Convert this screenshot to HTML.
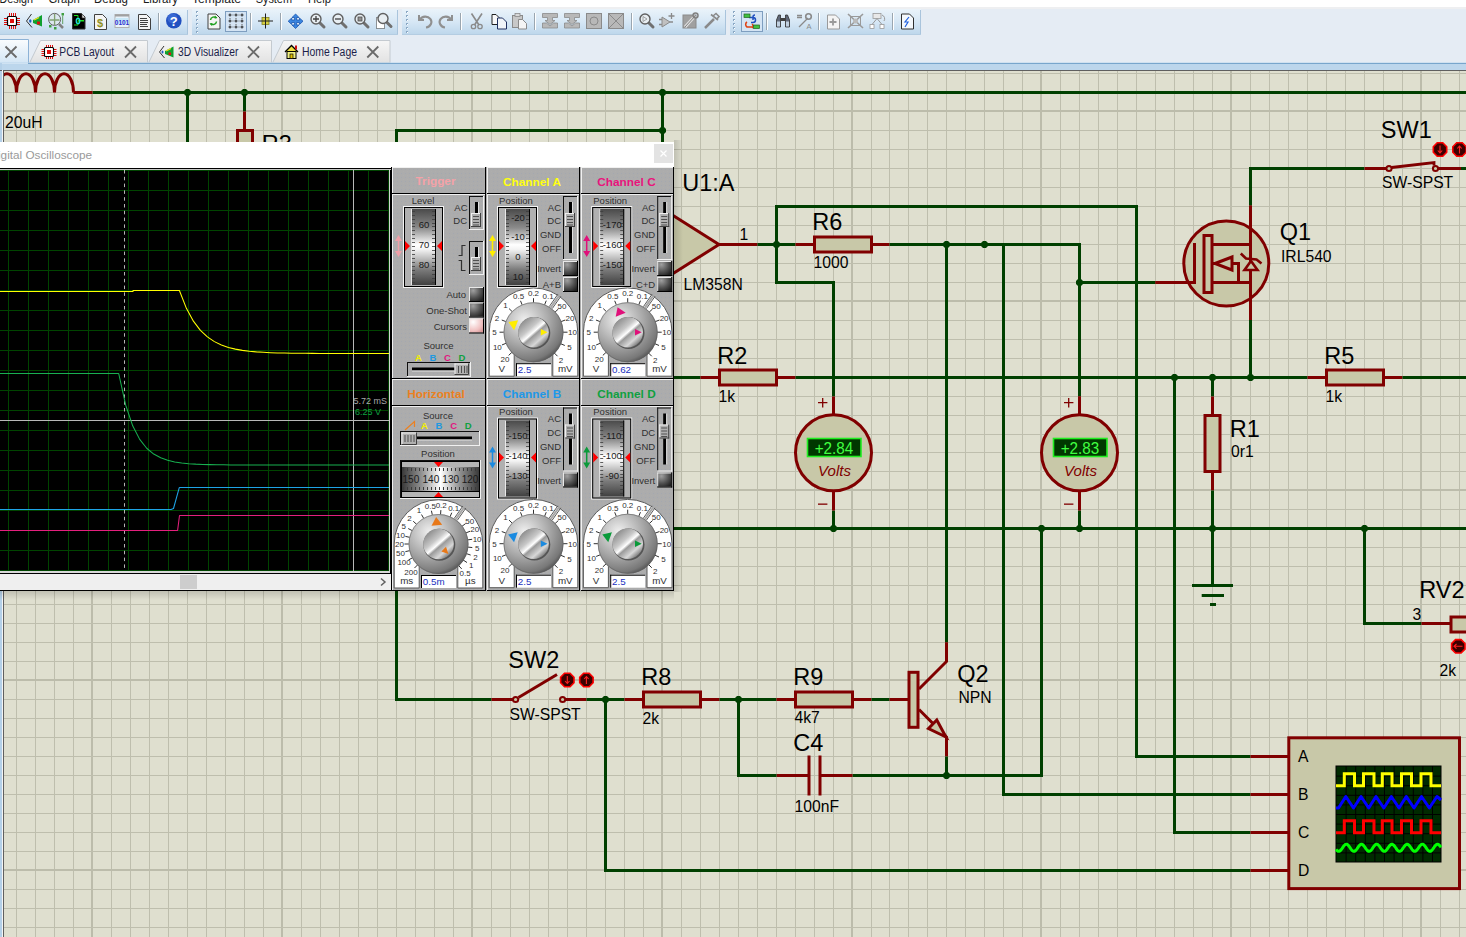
<!DOCTYPE html><html><head><meta charset="utf-8"><style>html,body{margin:0;padding:0;width:1466px;height:937px;overflow:hidden;background:#fff}</style></head><body><svg width="1466" height="937" viewBox="0 0 1466 937" font-family='"Liberation Sans", sans-serif' style="display:block">
<defs><linearGradient id="tbg" x1="0" y1="0" x2="0" y2="1"><stop offset="0" stop-color="#eaf3fa"/><stop offset="0.5" stop-color="#d6e7f5"/><stop offset="1" stop-color="#bcd6eb"/></linearGradient><linearGradient id="tabg" x1="0" y1="0" x2="0" y2="1"><stop offset="0" stop-color="#f6f6f6"/><stop offset="1" stop-color="#e2e2e2"/></linearGradient><linearGradient id="tabA" x1="0" y1="0" x2="0" y2="1"><stop offset="0" stop-color="#fafcfe"/><stop offset="1" stop-color="#d4e6f5"/></linearGradient></defs>
<rect x="0" y="0" width="1466" height="71" fill="#e5ecf4"/>
<rect x="0" y="0" width="1466" height="7" fill="#ffffff"/>
<rect x="0" y="7" width="1466" height="2" fill="#eeeff1"/>
<text x="-0.5" y="3" font-size="12.5" fill="#1a1a1a" text-anchor="start" font-weight="normal" font-style="normal" textLength="33.5" lengthAdjust="spacingAndGlyphs">Design</text>
<text x="48.4" y="3" font-size="12.5" fill="#1a1a1a" text-anchor="start" font-weight="normal" font-style="normal" textLength="31.4" lengthAdjust="spacingAndGlyphs">Graph</text>
<text x="94" y="3" font-size="12.5" fill="#1a1a1a" text-anchor="start" font-weight="normal" font-style="normal" textLength="34.0" lengthAdjust="spacingAndGlyphs">Debug</text>
<text x="143" y="3" font-size="12.5" fill="#1a1a1a" text-anchor="start" font-weight="normal" font-style="normal" textLength="35.0" lengthAdjust="spacingAndGlyphs">Library</text>
<text x="192" y="3" font-size="12.5" fill="#1a1a1a" text-anchor="start" font-weight="normal" font-style="normal" textLength="49.0" lengthAdjust="spacingAndGlyphs">Template</text>
<text x="255.7" y="3" font-size="12.5" fill="#1a1a1a" text-anchor="start" font-weight="normal" font-style="normal" textLength="36.3" lengthAdjust="spacingAndGlyphs">System</text>
<text x="308" y="3" font-size="12.5" fill="#1a1a1a" text-anchor="start" font-weight="normal" font-style="normal" textLength="23.0" lengthAdjust="spacingAndGlyphs">Help</text>
<rect x="0" y="9" width="188" height="26" fill="url(#tbg)"/><rect x="187" y="10" width="1" height="25" fill="#a9c4dc"/><rect x="0" y="34" width="188" height="1" fill="#b4cde2"/>
<rect x="192" y="9" width="206" height="26" fill="url(#tbg)"/><rect x="397" y="10" width="1" height="25" fill="#a9c4dc"/><rect x="192" y="34" width="206" height="1" fill="#b4cde2"/>
<rect x="402" y="9" width="324" height="26" fill="url(#tbg)"/><rect x="725" y="10" width="1" height="25" fill="#a9c4dc"/><rect x="402" y="34" width="324" height="1" fill="#b4cde2"/>
<rect x="730" y="9" width="191" height="26" fill="url(#tbg)"/><rect x="920" y="10" width="1" height="25" fill="#a9c4dc"/><rect x="730" y="34" width="191" height="1" fill="#b4cde2"/>
<path d="M9.5 13v3M11.5 13v3M13.5 13v3M15.5 13v3M9.5 26v3M11.5 26v3M13.5 26v3M15.5 26v3M4 18.5h3M4 20.5h3M4 22.5h3M4 24.5h3M17 18.5h3M17 20.5h3M17 22.5h3M17 24.5h3" stroke="#e01010" stroke-width="1"/>
<rect x="7.5" y="16.5" width="9" height="9" rx="1" fill="#fff" stroke="#000" stroke-width="1.2"/><rect x="10" y="19" width="4" height="4" fill="#e01010"/>
<path d="M31.5 14 L26.5 21 L32 27.5" stroke="#303030" stroke-width="1" fill="none"/><ellipse cx="30.3" cy="21" rx="1.2" ry="1.8" fill="#2060c0"/>
<path d="M33 20 L42 15 V26.5 L33 23 Z" fill="#10a030"/><path d="M34 20 L39 17.5" stroke="#f0e020" stroke-width="1.3"/><rect x="37" y="21.5" width="3" height="3" fill="#e01010"/>
<circle cx="54.6" cy="19.4" r="6" fill="#dce8f0" stroke="#606060" stroke-width="1"/><path d="M54.6 14 V25 M49.5 20 H59.5" stroke="#80a070" stroke-width="1.3"/><path d="M59 24 L63 28" stroke="#808080" stroke-width="2.5"/><rect x="49" y="25" width="2.5" height="2.5" fill="#40a040"/><rect x="54" y="27" width="2.5" height="2.5" fill="#40a040"/><rect x="61.5" y="13" width="2.5" height="2.5" fill="#40a040"/><path d="M62.7 15.5 V24" stroke="#60a060" stroke-width="1"/>
<path d="M72.5 13.5 h9 l3.5 3.5 v12 h-12.5 Z" fill="#000" stroke="#303030" stroke-width="1"/><path d="M82 14 v4 h3" fill="#fff" stroke="#303030" stroke-width="0.8"/>
<path d="M74 15.5 h4 v5 h6 M74 25 h4 v-4 h6" stroke="#20e020" stroke-width="1" fill="none"/><ellipse cx="78" cy="21" rx="1.8" ry="2.6" fill="none" stroke="#20e0e0" stroke-width="1.2"/>
<path d="M94.5 14.5 h8 l4 4 v11 h-12 Z" fill="#f4f4f4" stroke="#404040" stroke-width="1"/>
<text x="100" y="26.5" font-size="11" fill="#909020" text-anchor="middle" font-weight="bold">$</text>
<rect x="115" y="14.5" width="14" height="13" fill="#e8f2fa" stroke="#b0b0b0" stroke-width="1"/><rect x="115" y="14.5" width="14" height="2" fill="#a0a0a0"/><rect x="115.5" y="18" width="13" height="6" fill="#c8e8f8"/>
<text x="122" y="25" font-size="6.5" fill="#3030d0" text-anchor="middle" font-weight="bold">0101</text>
<path d="M138.5 14.5 h8 l4 4 v11 h-12 Z" fill="#f4f4f4" stroke="#404040" stroke-width="1"/>
<path d="M140 18.5h7M140 20.5h8M140 22.5h8M140 24.5h7M140 26.5h8" stroke="#404040" stroke-width="1"/>
<rect x="158" y="13" width="1" height="17" fill="#9aa6b0"/><rect x="159" y="13" width="1" height="17" fill="#ffffff"/>
<circle cx="173.8" cy="20.7" r="7.8" fill="#2050c0"/><circle cx="172.5" cy="18.5" r="5" fill="#4a78e0" opacity="0.6"/>
<text x="173.8" y="25.5" font-size="13" fill="#fff" text-anchor="middle" font-weight="bold">?</text>
<rect x="196" y="11" width="2" height="2" fill="#8aa8c4"/><rect x="197" y="12" width="1" height="1" fill="#fff"/><rect x="196" y="15" width="2" height="2" fill="#8aa8c4"/><rect x="197" y="16" width="1" height="1" fill="#fff"/><rect x="196" y="19" width="2" height="2" fill="#8aa8c4"/><rect x="197" y="20" width="1" height="1" fill="#fff"/><rect x="196" y="23" width="2" height="2" fill="#8aa8c4"/><rect x="197" y="24" width="1" height="1" fill="#fff"/><rect x="196" y="27" width="2" height="2" fill="#8aa8c4"/><rect x="197" y="28" width="1" height="1" fill="#fff"/><rect x="196" y="31" width="2" height="2" fill="#8aa8c4"/><rect x="197" y="32" width="1" height="1" fill="#fff"/>
<path d="M208.0 14.0 h8 l4 4 v11 h-12 Z" fill="#f4f4f4" stroke="#404040" stroke-width="1"/>
<path d="M210.5 20 a3.5 3.5 0 0 1 6 -2 M216.5 21.5 a3.5 3.5 0 0 1 -6 2" stroke="#20a020" stroke-width="1.5" fill="none"/><path d="M215 15.5 l2.5 2.5 l-3 0.5 Z M212 26 l-2.5 -2.5 l3 -0.5 Z" fill="#20a020"/>
<rect x="225.5" y="11.5" width="21" height="20" fill="#d4e4f4" stroke="#7e9ec0" stroke-width="1"/>
<path d="M228.5 15 h3 M230 13.5 v3" stroke="#202020" stroke-width="1"/><path d="M234.5 15 h3 M236 13.5 v3" stroke="#202020" stroke-width="1"/><path d="M240.5 15 h3 M242 13.5 v3" stroke="#202020" stroke-width="1"/><path d="M228.5 21 h3 M230 19.5 v3" stroke="#202020" stroke-width="1"/><path d="M234.5 21 h3 M236 19.5 v3" stroke="#202020" stroke-width="1"/><path d="M240.5 21 h3 M242 19.5 v3" stroke="#202020" stroke-width="1"/><path d="M228.5 27 h3 M230 25.5 v3" stroke="#202020" stroke-width="1"/><path d="M234.5 27 h3 M236 25.5 v3" stroke="#202020" stroke-width="1"/><path d="M240.5 27 h3 M242 25.5 v3" stroke="#202020" stroke-width="1"/>
<path d="M232.5 15h1M238.5 15h1M232.5 21h1M238.5 21h1M232.5 27h1M238.5 27h1M230 18v1M236 18v1M242 18v1M230 24v1M236 24v1M242 24v1" stroke="#606060" stroke-width="1"/>
<rect x="250" y="13" width="1" height="17" fill="#9aa6b0"/><rect x="251" y="13" width="1" height="17" fill="#ffffff"/>
<rect x="262" y="17.5" width="7" height="7" fill="#d8d040" stroke="#808020" stroke-width="0.8"/><path d="M258 21 H273 M265.5 13.5 V28.5" stroke="#202020" stroke-width="1"/>
<rect x="280" y="13" width="1" height="17" fill="#9aa6b0"/><rect x="281" y="13" width="1" height="17" fill="#ffffff"/>
<path d="M295.6 14 L299 17.5 H296.6 V20 H299.5 V18 L303 21.2 L299.5 24.5 V22.5 H296.6 V25 H299 L295.6 28.5 L292 25 H294.6 V22.5 H291.7 V24.5 L288.2 21.2 L291.7 18 V20 H294.6 V17.5 H292 Z" fill="#3a86e0" stroke="#1a56b0" stroke-width="0.8"/>
<line x1="319.5" y1="22.5" x2="324" y2="27" stroke="#707070" stroke-width="3" stroke-linecap="round"/><circle cx="316" cy="19" r="5" fill="#e8eef2" stroke="#606060" stroke-width="1.4"/><path d="M313 19h6M316 16v6" stroke="#404040" stroke-width="1.3"/>
<line x1="341.5" y1="22.5" x2="346" y2="27" stroke="#707070" stroke-width="3" stroke-linecap="round"/><circle cx="338" cy="19" r="5" fill="#e8eef2" stroke="#606060" stroke-width="1.4"/><path d="M335 19h6" stroke="#404040" stroke-width="1.3"/>
<line x1="363.5" y1="22.5" x2="368" y2="27" stroke="#707070" stroke-width="3" stroke-linecap="round"/><circle cx="360" cy="19" r="5" fill="#e8eef2" stroke="#606060" stroke-width="1.4"/><rect x="358" y="17" width="4" height="4" fill="#909090" stroke="#505050" stroke-width="0.8"/>
<rect x="376.5" y="17.5" width="8" height="11" fill="#fff" stroke="#303030" stroke-width="1" stroke-dasharray="1 1"/>
<line x1="386.5" y1="22.0" x2="391" y2="26.5" stroke="#707070" stroke-width="3" stroke-linecap="round"/><circle cx="383" cy="18.5" r="5" fill="#e8eef2" stroke="#606060" stroke-width="1.4"/>
<rect x="406" y="11" width="2" height="2" fill="#8aa8c4"/><rect x="407" y="12" width="1" height="1" fill="#fff"/><rect x="406" y="15" width="2" height="2" fill="#8aa8c4"/><rect x="407" y="16" width="1" height="1" fill="#fff"/><rect x="406" y="19" width="2" height="2" fill="#8aa8c4"/><rect x="407" y="20" width="1" height="1" fill="#fff"/><rect x="406" y="23" width="2" height="2" fill="#8aa8c4"/><rect x="407" y="24" width="1" height="1" fill="#fff"/><rect x="406" y="27" width="2" height="2" fill="#8aa8c4"/><rect x="407" y="28" width="1" height="1" fill="#fff"/><rect x="406" y="31" width="2" height="2" fill="#8aa8c4"/><rect x="407" y="32" width="1" height="1" fill="#fff"/>
<path d="M419 15 v5 h5" stroke="#909090" stroke-width="2" fill="none"/><path d="M420 19.5 a6 5.5 0 1 1 6 8" stroke="#909090" stroke-width="2.2" fill="none"/>
<path d="M452 15 v5 h-5" stroke="#909090" stroke-width="2" fill="none"/><path d="M451 19.5 a6 5.5 0 1 0 -6 8" stroke="#909090" stroke-width="2.2" fill="none"/>
<rect x="460" y="13" width="1" height="17" fill="#9aa6b0"/><rect x="461" y="13" width="1" height="17" fill="#ffffff"/>
<path d="M471.5 13.5 L479 25 M482 13.5 L474.5 25" stroke="#8a8a8a" stroke-width="1.6"/><circle cx="473.5" cy="26.5" r="2.2" fill="none" stroke="#8a8a8a" stroke-width="1.3"/><circle cx="480" cy="26.5" r="2.2" fill="none" stroke="#8a8a8a" stroke-width="1.3"/>
<path d="M492.0 14.5 h4 l4 4 v6 h-8 Z" fill="#f8f8f8" stroke="#202020" stroke-width="1"/><path d="M497.5 18.0 h5 l4 4 v7 h-9 Z" fill="#f0f4f8" stroke="#203060" stroke-width="1"/>
<rect x="512.5" y="15.5" width="10" height="12" fill="#c8c8c8" stroke="#8a8a8a" stroke-width="1"/><rect x="515" y="13.5" width="5" height="3" fill="#d8d8d8" stroke="#8a8a8a" stroke-width="0.8"/><path d="M518.5 19.5 h4 l4 4 v5.5 h-8 Z" fill="#f4f4f4" stroke="#8a8a8a" stroke-width="1"/>
<rect x="534" y="13" width="1" height="17" fill="#9aa6b0"/><rect x="535" y="13" width="1" height="17" fill="#ffffff"/>
<path d="M542.5 13.5 h15 v4 h-5 v3 h2.5 l-5 4 l-5 -4 h2.5 v-3 h-5 Z M542.5 23 h4 l3.5 3 l3.5 -3 h4 v5 h-15 Z" fill="#b8b8b8" stroke="#8a8a8a" stroke-width="0.8"/>
<path d="M564.5 13.5 h15 v4 h-5 v3 h2.5 l-5 4 l-5 -4 h2.5 v-3 h-5 Z M564.5 23 h4 l3.5 3 l3.5 -3 h4 v5 h-15 Z" fill="#b8b8b8" stroke="#8a8a8a" stroke-width="0.8"/>
<rect x="586.5" y="13.5" width="15" height="15" fill="#b8b8b8" stroke="#8a8a8a" stroke-width="1"/><circle cx="594" cy="21" r="4" fill="none" stroke="#8a8a8a" stroke-width="1"/>
<rect x="608.5" y="13.5" width="15" height="15" fill="#b8b8b8" stroke="#8a8a8a" stroke-width="1"/><path d="M609 14 L623 28 M623 14 L609 28" stroke="#8a8a8a" stroke-width="1"/>
<rect x="631" y="13" width="1" height="17" fill="#9aa6b0"/><rect x="632" y="13" width="1" height="17" fill="#ffffff"/>
<line x1="648.5" y1="22.5" x2="653" y2="27" stroke="#707070" stroke-width="3" stroke-linecap="round"/><circle cx="645" cy="19" r="5" fill="#e8eef2" stroke="#606060" stroke-width="1.4"/><path d="M643 16.5 v5 l4 -2.5 Z" fill="none" stroke="#909090" stroke-width="0.8"/>
<path d="M662 17 v10 l8 -5 Z" fill="#c0c0c0" stroke="#8a8a8a" stroke-width="1"/><path d="M659 19.5h3M659 24.5h3M670 22h3M671.5 13v6M668.5 16h6" stroke="#8a8a8a" stroke-width="1.3"/>
<rect x="683" y="15" width="13" height="13" fill="#a0a0a0" stroke="#8a8a8a" stroke-width="1"/><path d="M685 27 L695 16" stroke="#e0e0e0" stroke-width="3"/><path d="M685 27 L695 16" stroke="#808080" stroke-width="1"/><circle cx="695.5" cy="15.5" r="2.5" fill="none" stroke="#808080" stroke-width="1.5"/>
<path d="M705 28 L714 19" stroke="#8a8a8a" stroke-width="2.5"/><path d="M711 14.5 L718 20 M713 16 l3 -2.5 l3 3 l-2.5 3" stroke="#8a8a8a" stroke-width="1.6" fill="none"/>
<rect x="733" y="11" width="2" height="2" fill="#8aa8c4"/><rect x="734" y="12" width="1" height="1" fill="#fff"/><rect x="733" y="15" width="2" height="2" fill="#8aa8c4"/><rect x="734" y="16" width="1" height="1" fill="#fff"/><rect x="733" y="19" width="2" height="2" fill="#8aa8c4"/><rect x="734" y="20" width="1" height="1" fill="#fff"/><rect x="733" y="23" width="2" height="2" fill="#8aa8c4"/><rect x="734" y="24" width="1" height="1" fill="#fff"/><rect x="733" y="27" width="2" height="2" fill="#8aa8c4"/><rect x="734" y="28" width="1" height="1" fill="#fff"/><rect x="733" y="31" width="2" height="2" fill="#8aa8c4"/><rect x="734" y="32" width="1" height="1" fill="#fff"/>
<rect x="741.5" y="11.5" width="21" height="20" fill="#d4e4f4" stroke="#7e9ec0" stroke-width="1"/>
<path d="M749 17.5 h4 a2.5 2.5 0 0 1 0 5 h-2 M753 20 v-3 a2 2 0 0 1 2 -2" stroke="#2050c0" stroke-width="1.5" fill="none"/><path d="M747 22 a3 3 0 0 0 0 5 h5 M752 24 a2.5 2.5 0 0 1 0 4" stroke="#e04010" stroke-width="1.5" fill="none"/>
<rect x="744" y="14" width="6" height="3.5" fill="#40c040" stroke="#206020" stroke-width="0.7"/><rect x="753.5" y="25" width="6" height="3.5" fill="#40c040" stroke="#206020" stroke-width="0.7"/>
<rect x="766" y="13" width="1" height="17" fill="#9aa6b0"/><rect x="767" y="13" width="1" height="17" fill="#ffffff"/>
<path d="M776.5 27 v-7 l2 -5 h2 v12 Z M789.5 27 v-7 l-2 -5 h-2 v12 Z" fill="#606878" stroke="#303030" stroke-width="0.8"/><rect x="780.5" y="18" width="5" height="3" fill="#404040"/><rect x="777" y="21.5" width="3" height="5" fill="#c0d0e0"/><rect x="786" y="21.5" width="3" height="5" fill="#c0d0e0"/>
<path d="M797 15.5h5M797 17.5h5M799 27 L808 18" stroke="#8a8a8a" stroke-width="1.3"/><circle cx="808.5" cy="16.5" r="2.8" fill="none" stroke="#8a8a8a" stroke-width="1.6"/><text x="809" y="29" font-size="7.5" fill="#8a8a8a" text-anchor="middle">A</text>
<rect x="818" y="13" width="1" height="17" fill="#9aa6b0"/><rect x="819" y="13" width="1" height="17" fill="#ffffff"/>
<path d="M827.5 15.0 h8 l4 4 v10 h-12 Z" fill="#f4f4f4" stroke="#9a9a9a" stroke-width="1"/><path d="M833 18.5v7M829.5 22h7" stroke="#9a9a9a" stroke-width="1.8"/>
<path d="M848 14 L863 28 M863 14 L848 28" stroke="#9a9a9a" stroke-width="1.6"/><rect x="850.5" y="16.5" width="10" height="9" fill="none" stroke="#9a9a9a" stroke-width="1"/><circle cx="855.5" cy="21" r="2.5" fill="#bbb"/>
<rect x="873" y="13.5" width="8" height="5" fill="#e8e8e8" stroke="#9a9a9a" stroke-width="0.8"/><rect x="870" y="24.5" width="4" height="4" fill="#fff" stroke="#9a9a9a" stroke-width="0.8"/><rect x="880" y="24.5" width="4" height="4" fill="#fff" stroke="#9a9a9a" stroke-width="0.8"/><path d="M877 18.5 l-5 6 M877 18.5 l5 6 M882 15 a4 4 0 0 1 2 6" stroke="#9a9a9a" stroke-width="1" fill="none"/>
<rect x="892" y="13" width="1" height="17" fill="#9aa6b0"/><rect x="893" y="13" width="1" height="17" fill="#ffffff"/>
<path d="M901.5 14.0 h8 l4 4 v11 h-12 Z" fill="#f4f8fc" stroke="#303030" stroke-width="1"/><path d="M909 17 L905 22 h3 L905 27" stroke="#2060e0" stroke-width="1.2" fill="none"/>
<path d="M-1 63 V39.5 H28.5 V63" fill="url(#tabA)" stroke="#8db2d6" stroke-width="1"/>
<path d="M5.5 46.5 L16.5 57.5 M16.5 46.5 L5.5 57.5" stroke="#6a6a6a" stroke-width="1.8"/>
<path d="M29.5 63 L40.5 40.5 H147.5 V63 Z" fill="url(#tabg)" stroke="#c4cad0" stroke-width="1"/>
<path d="M46.5 45v2.5M48.5 45v2.5M50.5 45v2.5M52.5 45v2.5M46.5 56.5v2.5M48.5 56.5v2.5M50.5 56.5v2.5M52.5 56.5v2.5M41.5 49.5h3M41.5 51.5h3M41.5 53.5h3M41.5 55.5h3M53.5 49.5h3M53.5 51.5h3M53.5 53.5h3M53.5 55.5h3" stroke="#e01010" stroke-width="1"/><rect x="44.5" y="47.5" width="9" height="9" rx="1" fill="#fff" stroke="#000" stroke-width="1.1"/><rect x="47" y="50" width="4" height="4" fill="#e01010"/>
<text x="59.3" y="56" font-size="12.5" fill="#1b1e4a" text-anchor="start" font-weight="normal" font-style="normal" textLength="54.7" lengthAdjust="spacingAndGlyphs">PCB Layout</text>
<path d="M125.0 46.5 L136.0 57.5 M136.0 46.5 L125.0 57.5" stroke="#6a6a6a" stroke-width="1.8"/>
<path d="M148.5 63 L159.5 40.5 H271.5 V63 Z" fill="url(#tabg)" stroke="#c4cad0" stroke-width="1"/>
<path d="M164 46 L159.5 52 L164.5 58" stroke="#303030" stroke-width="1" fill="none"/><ellipse cx="162.5" cy="52" rx="1" ry="1.6" fill="#2060c0"/><path d="M165 51 L173.5 46.5 V57.5 L165 54 Z" fill="#10a030"/><path d="M166 51 L171 48.5" stroke="#f0e020" stroke-width="1.2"/><rect x="168.5" y="52.5" width="2.5" height="2.5" fill="#e01010"/>
<text x="178" y="56" font-size="12.5" fill="#1b1e4a" text-anchor="start" font-weight="normal" font-style="normal" textLength="60.4" lengthAdjust="spacingAndGlyphs">3D Visualizer</text>
<path d="M248.0 46.5 L259.0 57.5 M259.0 46.5 L248.0 57.5" stroke="#6a6a6a" stroke-width="1.8"/>
<path d="M272.5 63 L283.5 40.5 H390 V63 Z" fill="url(#tabg)" stroke="#c4cad0" stroke-width="1"/>
<path d="M285 52 L291.5 45.5 L298 52" stroke="#000" stroke-width="1.3" fill="#f0e040"/><rect x="287" y="51.5" width="9" height="7" fill="#f0f080" stroke="#000" stroke-width="1"/><rect x="290" y="54" width="3" height="4.5" fill="#e0c000" stroke="#000" stroke-width="0.7"/><rect x="295" y="45.5" width="2" height="4" fill="#d01010"/>
<text x="302" y="56" font-size="12.5" fill="#1b1e4a" text-anchor="start" font-weight="normal" font-style="normal" textLength="55" lengthAdjust="spacingAndGlyphs">Home Page</text>
<path d="M367.3 46.5 L378.3 57.5 M378.3 46.5 L367.3 57.5" stroke="#6a6a6a" stroke-width="1.8"/>
<rect x="0" y="62.5" width="1466" height="7.5" fill="#bcd6ec"/>
<rect x="28" y="63" width="1438" height="1" fill="#78a6cc"/><rect x="0" y="63" width="28" height="1" fill="#cfe2f2"/>
<rect x="0" y="63" width="2" height="874" fill="#b4d0e8"/>
<rect x="0" y="70" width="1466" height="1" fill="#5f5f5f"/>
<rect x="3" y="70" width="1" height="867" fill="#5f5f5f"/>
<rect x="2" y="70" width="1" height="867" fill="#f4f4f4"/>
<defs><clipPath id="cv"><rect x="4" y="71" width="1462" height="866"/></clipPath>
<linearGradient id="drumV" x1="0" y1="0" x2="0" y2="1">
 <stop offset="0" stop-color="#4a4a4a"/><stop offset="0.25" stop-color="#8c8c8c"/>
 <stop offset="0.47" stop-color="#ffffff"/><stop offset="0.53" stop-color="#f4f4f4"/>
 <stop offset="0.8" stop-color="#7a7a7a"/><stop offset="1" stop-color="#404040"/>
</linearGradient>
<linearGradient id="drumH" x1="0" y1="0" x2="1" y2="0">
 <stop offset="0" stop-color="#3a3a3a"/><stop offset="0.25" stop-color="#909090"/>
 <stop offset="0.5" stop-color="#ffffff"/>
 <stop offset="0.75" stop-color="#909090"/><stop offset="1" stop-color="#3a3a3a"/>
</linearGradient>
<radialGradient id="btn" cx="0.3" cy="0.25" r="0.9">
 <stop offset="0" stop-color="#a0a0a0"/><stop offset="0.6" stop-color="#505050"/><stop offset="1" stop-color="#202020"/>
</radialGradient>
<radialGradient id="btnPink" cx="0.3" cy="0.25" r="0.9">
 <stop offset="0" stop-color="#ffffff"/><stop offset="0.7" stop-color="#f0c0c0"/><stop offset="1" stop-color="#d89898"/>
</radialGradient>
<radialGradient id="knobOuter" cx="0.35" cy="0.3" r="0.75">
 <stop offset="0" stop-color="#f0f0f0"/><stop offset="0.55" stop-color="#a8a8a8"/><stop offset="0.9" stop-color="#787878"/><stop offset="1" stop-color="#555"/>
</radialGradient>
<linearGradient id="knobInner" x1="0.15" y1="0.1" x2="0.85" y2="0.9">
 <stop offset="0" stop-color="#8a8a8a"/><stop offset="0.35" stop-color="#c8c8c8"/>
 <stop offset="0.5" stop-color="#ffffff"/><stop offset="0.58" stop-color="#9a9a9a"/>
 <stop offset="0.8" stop-color="#d8d8d8"/><stop offset="1" stop-color="#707070"/>
</linearGradient>
<linearGradient id="shR" x1="0" y1="0" x2="1" y2="0"><stop offset="0" stop-color="#000" stop-opacity="0.14"/><stop offset="1" stop-color="#000" stop-opacity="0"/></linearGradient>
<linearGradient id="shB" x1="0" y1="0" x2="0" y2="1"><stop offset="0" stop-color="#000" stop-opacity="0.14"/><stop offset="1" stop-color="#000" stop-opacity="0"/></linearGradient>
<linearGradient id="shT" x1="0" y1="0" x2="0" y2="1"><stop offset="0" stop-color="#fff" stop-opacity="1"/><stop offset="1" stop-color="#fff" stop-opacity="0"/></linearGradient>
<pattern id="stip" width="4" height="4" patternUnits="userSpaceOnUse">
 <rect width="4" height="4" fill="#acacac"/><rect x="1" y="1" width="1" height="1" fill="#a4a8b0"/><rect x="3" y="3" width="1" height="1" fill="#aeaeae"/>
</pattern>
</defs>
<g clip-path="url(#cv)">
<rect x="4" y="71" width="1462" height="866" fill="#dfdfcf"/>
<rect x="16" y="71" width="1" height="866" fill="#bebead"/>
<rect x="35" y="71" width="1" height="866" fill="#bebead"/>
<rect x="54" y="71" width="1" height="866" fill="#bebead"/>
<rect x="73" y="71" width="1" height="866" fill="#bebead"/>
<rect x="91" y="71" width="2" height="866" fill="#bcbcab"/>
<rect x="111" y="71" width="1" height="866" fill="#bebead"/>
<rect x="130" y="71" width="1" height="866" fill="#bebead"/>
<rect x="149" y="71" width="1" height="866" fill="#bebead"/>
<rect x="168" y="71" width="1" height="866" fill="#bebead"/>
<rect x="187" y="71" width="1" height="866" fill="#bebead"/>
<rect x="206" y="71" width="1" height="866" fill="#bebead"/>
<rect x="225" y="71" width="1" height="866" fill="#bebead"/>
<rect x="244" y="71" width="1" height="866" fill="#bebead"/>
<rect x="263" y="71" width="1" height="866" fill="#bebead"/>
<rect x="281" y="71" width="2" height="866" fill="#bcbcab"/>
<rect x="301" y="71" width="1" height="866" fill="#bebead"/>
<rect x="320" y="71" width="1" height="866" fill="#bebead"/>
<rect x="339" y="71" width="1" height="866" fill="#bebead"/>
<rect x="358" y="71" width="1" height="866" fill="#bebead"/>
<rect x="377" y="71" width="1" height="866" fill="#bebead"/>
<rect x="396" y="71" width="1" height="866" fill="#bebead"/>
<rect x="415" y="71" width="1" height="866" fill="#bebead"/>
<rect x="434" y="71" width="1" height="866" fill="#bebead"/>
<rect x="453" y="71" width="1" height="866" fill="#bebead"/>
<rect x="471" y="71" width="2" height="866" fill="#bcbcab"/>
<rect x="491" y="71" width="1" height="866" fill="#bebead"/>
<rect x="510" y="71" width="1" height="866" fill="#bebead"/>
<rect x="529" y="71" width="1" height="866" fill="#bebead"/>
<rect x="548" y="71" width="1" height="866" fill="#bebead"/>
<rect x="567" y="71" width="1" height="866" fill="#bebead"/>
<rect x="586" y="71" width="1" height="866" fill="#bebead"/>
<rect x="605" y="71" width="1" height="866" fill="#bebead"/>
<rect x="624" y="71" width="1" height="866" fill="#bebead"/>
<rect x="643" y="71" width="1" height="866" fill="#bebead"/>
<rect x="661" y="71" width="2" height="866" fill="#bcbcab"/>
<rect x="681" y="71" width="1" height="866" fill="#bebead"/>
<rect x="700" y="71" width="1" height="866" fill="#bebead"/>
<rect x="719" y="71" width="1" height="866" fill="#bebead"/>
<rect x="738" y="71" width="1" height="866" fill="#bebead"/>
<rect x="757" y="71" width="1" height="866" fill="#bebead"/>
<rect x="776" y="71" width="1" height="866" fill="#bebead"/>
<rect x="795" y="71" width="1" height="866" fill="#bebead"/>
<rect x="814" y="71" width="1" height="866" fill="#bebead"/>
<rect x="833" y="71" width="1" height="866" fill="#bebead"/>
<rect x="851" y="71" width="2" height="866" fill="#bcbcab"/>
<rect x="871" y="71" width="1" height="866" fill="#bebead"/>
<rect x="889" y="71" width="1" height="866" fill="#bebead"/>
<rect x="908" y="71" width="1" height="866" fill="#bebead"/>
<rect x="927" y="71" width="1" height="866" fill="#bebead"/>
<rect x="946" y="71" width="1" height="866" fill="#bebead"/>
<rect x="965" y="71" width="1" height="866" fill="#bebead"/>
<rect x="984" y="71" width="1" height="866" fill="#bebead"/>
<rect x="1003" y="71" width="1" height="866" fill="#bebead"/>
<rect x="1022" y="71" width="1" height="866" fill="#bebead"/>
<rect x="1040" y="71" width="2" height="866" fill="#bcbcab"/>
<rect x="1060" y="71" width="1" height="866" fill="#bebead"/>
<rect x="1079" y="71" width="1" height="866" fill="#bebead"/>
<rect x="1098" y="71" width="1" height="866" fill="#bebead"/>
<rect x="1117" y="71" width="1" height="866" fill="#bebead"/>
<rect x="1136" y="71" width="1" height="866" fill="#bebead"/>
<rect x="1155" y="71" width="1" height="866" fill="#bebead"/>
<rect x="1174" y="71" width="1" height="866" fill="#bebead"/>
<rect x="1193" y="71" width="1" height="866" fill="#bebead"/>
<rect x="1212" y="71" width="1" height="866" fill="#bebead"/>
<rect x="1230" y="71" width="2" height="866" fill="#bcbcab"/>
<rect x="1250" y="71" width="1" height="866" fill="#bebead"/>
<rect x="1269" y="71" width="1" height="866" fill="#bebead"/>
<rect x="1288" y="71" width="1" height="866" fill="#bebead"/>
<rect x="1307" y="71" width="1" height="866" fill="#bebead"/>
<rect x="1326" y="71" width="1" height="866" fill="#bebead"/>
<rect x="1345" y="71" width="1" height="866" fill="#bebead"/>
<rect x="1364" y="71" width="1" height="866" fill="#bebead"/>
<rect x="1383" y="71" width="1" height="866" fill="#bebead"/>
<rect x="1402" y="71" width="1" height="866" fill="#bebead"/>
<rect x="1420" y="71" width="2" height="866" fill="#bcbcab"/>
<rect x="1440" y="71" width="1" height="866" fill="#bebead"/>
<rect x="1459" y="71" width="1" height="866" fill="#bebead"/>
<rect x="4" y="73" width="1462" height="1" fill="#bebead"/>
<rect x="4" y="92" width="1462" height="1" fill="#bebead"/>
<rect x="4" y="110" width="1462" height="2" fill="#bcbcab"/>
<rect x="4" y="130" width="1462" height="1" fill="#bebead"/>
<rect x="4" y="149" width="1462" height="1" fill="#bebead"/>
<rect x="4" y="168" width="1462" height="1" fill="#bebead"/>
<rect x="4" y="187" width="1462" height="1" fill="#bebead"/>
<rect x="4" y="206" width="1462" height="1" fill="#bebead"/>
<rect x="4" y="225" width="1462" height="1" fill="#bebead"/>
<rect x="4" y="244" width="1462" height="1" fill="#bebead"/>
<rect x="4" y="263" width="1462" height="1" fill="#bebead"/>
<rect x="4" y="282" width="1462" height="1" fill="#bebead"/>
<rect x="4" y="300" width="1462" height="2" fill="#bcbcab"/>
<rect x="4" y="320" width="1462" height="1" fill="#bebead"/>
<rect x="4" y="339" width="1462" height="1" fill="#bebead"/>
<rect x="4" y="358" width="1462" height="1" fill="#bebead"/>
<rect x="4" y="377" width="1462" height="1" fill="#bebead"/>
<rect x="4" y="396" width="1462" height="1" fill="#bebead"/>
<rect x="4" y="415" width="1462" height="1" fill="#bebead"/>
<rect x="4" y="434" width="1462" height="1" fill="#bebead"/>
<rect x="4" y="452" width="1462" height="1" fill="#bebead"/>
<rect x="4" y="471" width="1462" height="1" fill="#bebead"/>
<rect x="4" y="489" width="1462" height="2" fill="#bcbcab"/>
<rect x="4" y="509" width="1462" height="1" fill="#bebead"/>
<rect x="4" y="528" width="1462" height="1" fill="#bebead"/>
<rect x="4" y="547" width="1462" height="1" fill="#bebead"/>
<rect x="4" y="566" width="1462" height="1" fill="#bebead"/>
<rect x="4" y="585" width="1462" height="1" fill="#bebead"/>
<rect x="4" y="604" width="1462" height="1" fill="#bebead"/>
<rect x="4" y="623" width="1462" height="1" fill="#bebead"/>
<rect x="4" y="642" width="1462" height="1" fill="#bebead"/>
<rect x="4" y="661" width="1462" height="1" fill="#bebead"/>
<rect x="4" y="679" width="1462" height="2" fill="#bcbcab"/>
<rect x="4" y="699" width="1462" height="1" fill="#bebead"/>
<rect x="4" y="718" width="1462" height="1" fill="#bebead"/>
<rect x="4" y="737" width="1462" height="1" fill="#bebead"/>
<rect x="4" y="756" width="1462" height="1" fill="#bebead"/>
<rect x="4" y="775" width="1462" height="1" fill="#bebead"/>
<rect x="4" y="794" width="1462" height="1" fill="#bebead"/>
<rect x="4" y="813" width="1462" height="1" fill="#bebead"/>
<rect x="4" y="832" width="1462" height="1" fill="#bebead"/>
<rect x="4" y="851" width="1462" height="1" fill="#bebead"/>
<rect x="4" y="869" width="1462" height="2" fill="#bcbcab"/>
<rect x="4" y="889" width="1462" height="1" fill="#bebead"/>
<rect x="4" y="908" width="1462" height="1" fill="#bebead"/>
<rect x="4" y="927" width="1462" height="1" fill="#bebead"/>
<polyline points="92.5,92.5 1470,92.5" stroke="#004000" stroke-width="3" fill="none" stroke-linejoin="miter" stroke-linecap="butt"/>
<polyline points="73.5,92.5 92.5,92.5" stroke="#800000" stroke-width="3" fill="none" stroke-linejoin="miter" stroke-linecap="butt"/>
<polyline points="187.5,92.5 187.5,160" stroke="#004000" stroke-width="3" fill="none" stroke-linejoin="miter" stroke-linecap="butt"/>
<polyline points="244.5,92.5 244.5,111.5" stroke="#004000" stroke-width="3" fill="none" stroke-linejoin="miter" stroke-linecap="butt"/>
<polyline points="244.5,111.5 244.5,129" stroke="#800000" stroke-width="3" fill="none" stroke-linejoin="miter" stroke-linecap="butt"/>
<polyline points="662.5,92.5 662.5,160" stroke="#004000" stroke-width="3" fill="none" stroke-linejoin="miter" stroke-linecap="butt"/>
<polyline points="396.5,160 396.5,130.5 662.5,130.5" stroke="#004000" stroke-width="3" fill="none" stroke-linejoin="miter" stroke-linecap="butt"/>
<polyline points="719,244.5 757.5,244.5" stroke="#800000" stroke-width="3" fill="none" stroke-linejoin="miter" stroke-linecap="butt"/>
<polyline points="757.5,244.5 795.5,244.5" stroke="#004000" stroke-width="3" fill="none" stroke-linejoin="miter" stroke-linecap="butt"/>
<polyline points="795.5,244.5 814.5,244.5" stroke="#800000" stroke-width="3" fill="none" stroke-linejoin="miter" stroke-linecap="butt"/>
<polyline points="871.5,244.5 889.5,244.5" stroke="#800000" stroke-width="3" fill="none" stroke-linejoin="miter" stroke-linecap="butt"/>
<polyline points="889.5,244.5 1079.5,244.5 1079.5,396.5" stroke="#004000" stroke-width="3" fill="none" stroke-linejoin="miter" stroke-linecap="butt"/>
<polyline points="1079.5,396.5 1079.5,415.5" stroke="#800000" stroke-width="3" fill="none" stroke-linejoin="miter" stroke-linecap="butt"/>
<polyline points="833.5,396.5 833.5,282.5 776.5,282.5 776.5,206.5 1136.5,206.5 1136.5,756.5 1250.5,756.5" stroke="#004000" stroke-width="3" fill="none" stroke-linejoin="miter" stroke-linecap="butt"/>
<polyline points="946.5,244.5 946.5,642.5" stroke="#004000" stroke-width="3" fill="none" stroke-linejoin="miter" stroke-linecap="butt"/>
<polyline points="1003.5,244.5 1003.5,794.5 1250.5,794.5" stroke="#004000" stroke-width="3" fill="none" stroke-linejoin="miter" stroke-linecap="butt"/>
<polyline points="1079.5,282.5 1155.5,282.5" stroke="#004000" stroke-width="3" fill="none" stroke-linejoin="miter" stroke-linecap="butt"/>
<polyline points="1155.5,282.5 1193.5,282.5" stroke="#800000" stroke-width="3" fill="none" stroke-linejoin="miter" stroke-linecap="butt"/>
<polyline points="674,377.5 700.5,377.5" stroke="#004000" stroke-width="3" fill="none" stroke-linejoin="miter" stroke-linecap="butt"/>
<polyline points="700.5,377.5 719.5,377.5" stroke="#800000" stroke-width="3" fill="none" stroke-linejoin="miter" stroke-linecap="butt"/>
<polyline points="776.5,377.5 795.5,377.5" stroke="#800000" stroke-width="3" fill="none" stroke-linejoin="miter" stroke-linecap="butt"/>
<polyline points="795.5,377.5 1307.5,377.5" stroke="#004000" stroke-width="3" fill="none" stroke-linejoin="miter" stroke-linecap="butt"/>
<polyline points="1307.5,377.5 1326.5,377.5" stroke="#800000" stroke-width="3" fill="none" stroke-linejoin="miter" stroke-linecap="butt"/>
<polyline points="1383.5,377.5 1402.5,377.5" stroke="#800000" stroke-width="3" fill="none" stroke-linejoin="miter" stroke-linecap="butt"/>
<polyline points="1402.5,377.5 1470,377.5" stroke="#004000" stroke-width="3" fill="none" stroke-linejoin="miter" stroke-linecap="butt"/>
<polyline points="1174.5,377.5 1174.5,832.5 1250.5,832.5" stroke="#004000" stroke-width="3" fill="none" stroke-linejoin="miter" stroke-linecap="butt"/>
<polyline points="1212.5,377.5 1212.5,396.5" stroke="#004000" stroke-width="3" fill="none" stroke-linejoin="miter" stroke-linecap="butt"/>
<polyline points="1212.5,396.5 1212.5,415.5" stroke="#800000" stroke-width="3" fill="none" stroke-linejoin="miter" stroke-linecap="butt"/>
<polyline points="1212.5,471.5 1212.5,490.5" stroke="#800000" stroke-width="3" fill="none" stroke-linejoin="miter" stroke-linecap="butt"/>
<polyline points="1212.5,490.5 1212.5,585.5" stroke="#004000" stroke-width="3" fill="none" stroke-linejoin="miter" stroke-linecap="butt"/>
<polyline points="1250.5,377.5 1250.5,320" stroke="#004000" stroke-width="3" fill="none" stroke-linejoin="miter" stroke-linecap="butt"/>
<polyline points="1250.5,320 1250.5,205.5" stroke="#800000" stroke-width="3" fill="none" stroke-linejoin="miter" stroke-linecap="butt"/>
<polyline points="1250.5,205.5 1250.5,168.5 1364.5,168.5" stroke="#004000" stroke-width="3" fill="none" stroke-linejoin="miter" stroke-linecap="butt"/>
<polyline points="1364.5,168.5 1386.5,168.5" stroke="#800000" stroke-width="3" fill="none" stroke-linejoin="miter" stroke-linecap="butt"/>
<polyline points="1438,168.5 1461,168.5" stroke="#800000" stroke-width="3" fill="none" stroke-linejoin="miter" stroke-linecap="butt"/>
<polyline points="1461,168.5 1470,168.5" stroke="#004000" stroke-width="3" fill="none" stroke-linejoin="miter" stroke-linecap="butt"/>
<polyline points="674,528.5 1470,528.5" stroke="#004000" stroke-width="3" fill="none" stroke-linejoin="miter" stroke-linecap="butt"/>
<polyline points="833.5,510.5 833.5,528.5" stroke="#004000" stroke-width="3" fill="none" stroke-linejoin="miter" stroke-linecap="butt"/>
<polyline points="1079.5,510.5 1079.5,528.5" stroke="#004000" stroke-width="3" fill="none" stroke-linejoin="miter" stroke-linecap="butt"/>
<polyline points="1041.5,528.5 1041.5,775.5 852.5,775.5" stroke="#004000" stroke-width="3" fill="none" stroke-linejoin="miter" stroke-linecap="butt"/>
<polyline points="852.5,775.5 820.5,775.5" stroke="#800000" stroke-width="3" fill="none" stroke-linejoin="miter" stroke-linecap="butt"/>
<polyline points="809.5,775.5 776.5,775.5" stroke="#800000" stroke-width="3" fill="none" stroke-linejoin="miter" stroke-linecap="butt"/>
<polyline points="776.5,775.5 738.5,775.5 738.5,699.5" stroke="#004000" stroke-width="3" fill="none" stroke-linejoin="miter" stroke-linecap="butt"/>
<polyline points="946.5,737.5 946.5,756.5" stroke="#800000" stroke-width="3" fill="none" stroke-linejoin="miter" stroke-linecap="butt"/>
<polyline points="946.5,756.5 946.5,775.5" stroke="#004000" stroke-width="3" fill="none" stroke-linejoin="miter" stroke-linecap="butt"/>
<polyline points="396.5,590 396.5,699.5 491.5,699.5" stroke="#004000" stroke-width="3" fill="none" stroke-linejoin="miter" stroke-linecap="butt"/>
<polyline points="491.5,699.5 513,699.5" stroke="#800000" stroke-width="3" fill="none" stroke-linejoin="miter" stroke-linecap="butt"/>
<polyline points="566,699.5 586.5,699.5" stroke="#800000" stroke-width="3" fill="none" stroke-linejoin="miter" stroke-linecap="butt"/>
<polyline points="586.5,699.5 624.5,699.5" stroke="#004000" stroke-width="3" fill="none" stroke-linejoin="miter" stroke-linecap="butt"/>
<polyline points="624.5,699.5 643.5,699.5" stroke="#800000" stroke-width="3" fill="none" stroke-linejoin="miter" stroke-linecap="butt"/>
<polyline points="700.5,699.5 719.5,699.5" stroke="#800000" stroke-width="3" fill="none" stroke-linejoin="miter" stroke-linecap="butt"/>
<polyline points="719.5,699.5 776.5,699.5" stroke="#004000" stroke-width="3" fill="none" stroke-linejoin="miter" stroke-linecap="butt"/>
<polyline points="776.5,699.5 795.5,699.5" stroke="#800000" stroke-width="3" fill="none" stroke-linejoin="miter" stroke-linecap="butt"/>
<polyline points="852.5,699.5 871.5,699.5" stroke="#800000" stroke-width="3" fill="none" stroke-linejoin="miter" stroke-linecap="butt"/>
<polyline points="871.5,699.5 889.5,699.5" stroke="#004000" stroke-width="3" fill="none" stroke-linejoin="miter" stroke-linecap="butt"/>
<polyline points="889.5,699.5 908.5,699.5" stroke="#800000" stroke-width="3" fill="none" stroke-linejoin="miter" stroke-linecap="butt"/>
<polyline points="605.5,699.5 605.5,870.5 1250.5,870.5" stroke="#004000" stroke-width="3" fill="none" stroke-linejoin="miter" stroke-linecap="butt"/>
<polyline points="1364.5,528.5 1364.5,623.5 1421.5,623.5" stroke="#004000" stroke-width="3" fill="none" stroke-linejoin="miter" stroke-linecap="butt"/>
<polyline points="1421.5,623.5 1451,623.5" stroke="#800000" stroke-width="3" fill="none" stroke-linejoin="miter" stroke-linecap="butt"/>
<polyline points="1250.5,756.5 1288.5,756.5" stroke="#800000" stroke-width="3" fill="none" stroke-linejoin="miter" stroke-linecap="butt"/>
<polyline points="1250.5,794.5 1288.5,794.5" stroke="#800000" stroke-width="3" fill="none" stroke-linejoin="miter" stroke-linecap="butt"/>
<polyline points="1250.5,832.5 1288.5,832.5" stroke="#800000" stroke-width="3" fill="none" stroke-linejoin="miter" stroke-linecap="butt"/>
<polyline points="1250.5,870.5 1288.5,870.5" stroke="#800000" stroke-width="3" fill="none" stroke-linejoin="miter" stroke-linecap="butt"/>
<polyline points="946.5,642.5 946.5,662" stroke="#800000" stroke-width="3" fill="none" stroke-linejoin="miter" stroke-linecap="butt"/>
<path d="M186 89 h3 l2 2 v3 l-2 2 h-3 l-2 -2 v-3 Z" fill="#004000"/>
<path d="M243 89 h3 l2 2 v3 l-2 2 h-3 l-2 -2 v-3 Z" fill="#004000"/>
<path d="M661 89 h3 l2 2 v3 l-2 2 h-3 l-2 -2 v-3 Z" fill="#004000"/>
<path d="M661 127 h3 l2 2 v3 l-2 2 h-3 l-2 -2 v-3 Z" fill="#004000"/>
<path d="M775 241 h3 l2 2 v3 l-2 2 h-3 l-2 -2 v-3 Z" fill="#004000"/>
<path d="M945 241 h3 l2 2 v3 l-2 2 h-3 l-2 -2 v-3 Z" fill="#004000"/>
<path d="M983 241 h3 l2 2 v3 l-2 2 h-3 l-2 -2 v-3 Z" fill="#004000"/>
<path d="M1078 279 h3 l2 2 v3 l-2 2 h-3 l-2 -2 v-3 Z" fill="#004000"/>
<path d="M1173 374 h3 l2 2 v3 l-2 2 h-3 l-2 -2 v-3 Z" fill="#004000"/>
<path d="M1211 374 h3 l2 2 v3 l-2 2 h-3 l-2 -2 v-3 Z" fill="#004000"/>
<path d="M1249 374 h3 l2 2 v3 l-2 2 h-3 l-2 -2 v-3 Z" fill="#004000"/>
<path d="M832 525 h3 l2 2 v3 l-2 2 h-3 l-2 -2 v-3 Z" fill="#004000"/>
<path d="M1040 525 h3 l2 2 v3 l-2 2 h-3 l-2 -2 v-3 Z" fill="#004000"/>
<path d="M1078 525 h3 l2 2 v3 l-2 2 h-3 l-2 -2 v-3 Z" fill="#004000"/>
<path d="M1211 525 h3 l2 2 v3 l-2 2 h-3 l-2 -2 v-3 Z" fill="#004000"/>
<path d="M1363 525 h3 l2 2 v3 l-2 2 h-3 l-2 -2 v-3 Z" fill="#004000"/>
<path d="M604 696 h3 l2 2 v3 l-2 2 h-3 l-2 -2 v-3 Z" fill="#004000"/>
<path d="M737 696 h3 l2 2 v3 l-2 2 h-3 l-2 -2 v-3 Z" fill="#004000"/>
<path d="M945 772 h3 l2 2 v3 l-2 2 h-3 l-2 -2 v-3 Z" fill="#004000"/>
<path d="M-2.5 92.5 A9.5 18.7 0 0 1 16.5 92.5 A9.5 18.7 0 0 1 35.5 92.5 A9.5 18.7 0 0 1 54.5 92.5 A9.5 18.7 0 0 1 73.5 92.5" stroke="#800000" stroke-width="3" fill="none"/>
<text x="5" y="128" font-size="15.7" fill="#000" text-anchor="start" font-weight="normal" font-style="normal" >20uH</text>
<rect x="237.5" y="130.5" width="15" height="60" fill="#c8c8a8" stroke="#800000" stroke-width="3"/>
<text x="261.8" y="152" font-size="23.5" fill="#000" text-anchor="start" font-weight="normal" font-style="normal" >R3</text>
<path d="M643 196.5 L719 244.5 L643 292.5 Z" fill="#c8c8a8" stroke="#800000" stroke-width="3" stroke-linejoin="miter"/>
<text x="682.3" y="190.7" font-size="23.5" fill="#000" text-anchor="start" font-weight="normal" font-style="normal" >U1:A</text>
<text x="739.5" y="240" font-size="15.7" fill="#000" text-anchor="start" font-weight="normal" font-style="normal" >1</text>
<text x="683.5" y="289.7" font-size="15.7" fill="#000" text-anchor="start" font-weight="normal" font-style="normal" >LM358N</text>
<rect x="814.5" y="237" width="57" height="15" fill="#c8c8a8" stroke="#800000" stroke-width="3"/>
<text x="812.3" y="230" font-size="23.5" fill="#000" text-anchor="start" font-weight="normal" font-style="normal" >R6</text>
<text x="813.5" y="268" font-size="15.7" fill="#000" text-anchor="start" font-weight="normal" font-style="normal" >1000</text>
<rect x="719.5" y="370" width="57" height="15" fill="#c8c8a8" stroke="#800000" stroke-width="3"/>
<text x="717.3" y="364" font-size="23.5" fill="#000" text-anchor="start" font-weight="normal" font-style="normal" >R2</text>
<text x="718.5" y="402" font-size="15.7" fill="#000" text-anchor="start" font-weight="normal" font-style="normal" >1k</text>
<rect x="1326.5" y="370" width="57" height="15" fill="#c8c8a8" stroke="#800000" stroke-width="3"/>
<text x="1324.3" y="364" font-size="23.5" fill="#000" text-anchor="start" font-weight="normal" font-style="normal" >R5</text>
<text x="1325.5" y="402" font-size="15.7" fill="#000" text-anchor="start" font-weight="normal" font-style="normal" >1k</text>
<rect x="1205" y="415.5" width="15" height="56" fill="#c8c8a8" stroke="#800000" stroke-width="3"/>
<text x="1229.8" y="436.5" font-size="23.5" fill="#000" text-anchor="start" font-weight="normal" font-style="normal" >R1</text>
<text x="1231" y="457" font-size="15.7" fill="#000" text-anchor="start" font-weight="normal" font-style="normal" >0r1</text>
<polyline points="833.5,396.5 833.5,414.7" stroke="#800000" stroke-width="3" fill="none" stroke-linejoin="miter" stroke-linecap="butt"/>
<polyline points="833.5,490.7 833.5,510.5" stroke="#800000" stroke-width="3" fill="none" stroke-linejoin="miter" stroke-linecap="butt"/>
<circle cx="833.5" cy="452.7" r="38" fill="#c8c8a8" stroke="#800000" stroke-width="3"/>
<rect x="807.5" y="438.5" width="53.5" height="18" fill="#003800" stroke="#20ee20" stroke-width="1.6"/>
<text x="814.7" y="454.3" font-size="16.5" fill="#40ff40" text-anchor="start" font-weight="normal" font-style="normal" textLength="38.5" lengthAdjust="spacingAndGlyphs">+2.84</text>
<text x="834.5" y="476" font-size="15" fill="#800000" text-anchor="middle" font-weight="normal" font-style="italic" >Volts</text>
<path d="M818 402.7 h9.4 M822.7 398 v9.4" stroke="#800000" stroke-width="1.3"/>
<rect x="818" y="503.5" width="9.4" height="1.3" fill="#800000"/>
<polyline points="1079.5,396.5 1079.5,414.7" stroke="#800000" stroke-width="3" fill="none" stroke-linejoin="miter" stroke-linecap="butt"/>
<polyline points="1079.5,490.7 1079.5,510.5" stroke="#800000" stroke-width="3" fill="none" stroke-linejoin="miter" stroke-linecap="butt"/>
<circle cx="1079.5" cy="452.7" r="38" fill="#c8c8a8" stroke="#800000" stroke-width="3"/>
<rect x="1053.5" y="438.5" width="53.5" height="18" fill="#003800" stroke="#20ee20" stroke-width="1.6"/>
<text x="1060.7" y="454.3" font-size="16.5" fill="#40ff40" text-anchor="start" font-weight="normal" font-style="normal" textLength="38.5" lengthAdjust="spacingAndGlyphs">+2.83</text>
<text x="1080.5" y="476" font-size="15" fill="#800000" text-anchor="middle" font-weight="normal" font-style="italic" >Volts</text>
<path d="M1064 402.7 h9.4 M1068.7 398 v9.4" stroke="#800000" stroke-width="1.3"/>
<rect x="1064" y="503.5" width="9.4" height="1.3" fill="#800000"/>
<circle cx="1226.3" cy="263.5" r="42.5" fill="#c8c8a8" stroke="#800000" stroke-width="3"/>
<polyline points="1250.5,205.5 1250.5,320" stroke="#800000" stroke-width="3" fill="none" stroke-linejoin="miter" stroke-linecap="butt"/>
<polyline points="1155.5,282.5 1194.5,282.5" stroke="#800000" stroke-width="3" fill="none" stroke-linejoin="miter" stroke-linecap="butt"/>
<polyline points="1194.5,243 1194.5,284" stroke="#800000" stroke-width="3" fill="none" stroke-linejoin="miter" stroke-linecap="butt"/>
<rect x="1204" y="235.5" width="8" height="57" fill="#c8c8a8" stroke="#800000" stroke-width="3"/>
<polyline points="1213,244.5 1250.5,244.5" stroke="#800000" stroke-width="3" fill="none" stroke-linejoin="miter" stroke-linecap="butt"/>
<polyline points="1213,282.5 1250.5,282.5" stroke="#800000" stroke-width="3" fill="none" stroke-linejoin="miter" stroke-linecap="butt"/>
<polyline points="1213,263.5 1238.5,263.5 1238.5,282.5" stroke="#800000" stroke-width="3" fill="none" stroke-linejoin="miter" stroke-linecap="butt"/>
<path d="M1215 263.5 L1232 257 L1232 270 Z" fill="#c8c8a8" stroke="#800000" stroke-width="3" stroke-linejoin="miter"/>
<path d="M1251 261 L1244.5 270 L1257.5 270 Z" fill="#c8c8a8" stroke="#800000" stroke-width="2.6"/>
<polyline points="1240.8,253.5 1246,258.5 1256.5,259.5 1261.5,263.5" stroke="#800000" stroke-width="2.6" fill="none" stroke-linejoin="miter" stroke-linecap="butt"/>
<text x="1279.8" y="240" font-size="23.5" fill="#000" text-anchor="start" font-weight="normal" font-style="normal" >Q1</text>
<text x="1281" y="262" font-size="15.7" fill="#000" text-anchor="start" font-weight="normal" font-style="normal" >IRL540</text>
<circle cx="1389" cy="168.5" r="2.6" fill="#c8c8a8" stroke="#800000" stroke-width="2"/>
<circle cx="1435.5" cy="168.5" r="2.6" fill="#c8c8a8" stroke="#800000" stroke-width="2"/>
<polyline points="1391.5,167.5 1434,162.5 1434,165.5" stroke="#800000" stroke-width="2.8" fill="none" stroke-linejoin="miter" stroke-linecap="butt"/>
<text x="1380.8" y="138" font-size="23.5" fill="#000" text-anchor="start" font-weight="normal" font-style="normal" >SW1</text>
<text x="1382" y="188.4" font-size="15.7" fill="#000" text-anchor="start" font-weight="normal" font-style="normal" >SW-SPST</text>
<path d="M1437.22 142.8 L1442.78 142.8 L1446.7 146.72 L1446.7 152.28 L1442.78 156.2 L1437.22 156.2 L1433.3 152.28 L1433.3 146.72 Z" fill="#3c0000" stroke="#ff0000" stroke-width="1.6"/>
<path d="M1440 145.5 V153 M1437.8 150.5 L1440 153 L1442.2 150.5" stroke="#ff2020" stroke-width="1.1" fill="none"/>
<path d="M1456.72 142.8 L1462.28 142.8 L1466.2 146.72 L1466.2 152.28 L1462.28 156.2 L1456.72 156.2 L1452.8 152.28 L1452.8 146.72 Z" fill="#3c0000" stroke="#ff0000" stroke-width="1.6"/>
<path d="M1459.5 153.5 V146 M1457.3 148.5 L1459.5 146 L1461.7 148.5" stroke="#ff2020" stroke-width="1.1" fill="none"/>
<circle cx="515.6" cy="699.5" r="2.6" fill="#c8c8a8" stroke="#800000" stroke-width="2"/>
<circle cx="562.6" cy="699.5" r="2.6" fill="#c8c8a8" stroke="#800000" stroke-width="2"/>
<polyline points="518.5,697.5 557,674.5" stroke="#800000" stroke-width="3" fill="none" stroke-linejoin="miter" stroke-linecap="butt"/>
<text x="508.3" y="668.4" font-size="23.5" fill="#000" text-anchor="start" font-weight="normal" font-style="normal" >SW2</text>
<text x="509.5" y="720" font-size="15.7" fill="#000" text-anchor="start" font-weight="normal" font-style="normal" >SW-SPST</text>
<path d="M564.52 673.3 L570.08 673.3 L574 677.22 L574 682.78 L570.08 686.7 L564.52 686.7 L560.6 682.78 L560.6 677.22 Z" fill="#3c0000" stroke="#ff0000" stroke-width="1.6"/>
<path d="M567.3 676 V683.5 M565.1 681 L567.3 683.5 L569.5 681" stroke="#ff2020" stroke-width="1.1" fill="none"/>
<path d="M583.62 673.3 L589.18 673.3 L593.1 677.22 L593.1 682.78 L589.18 686.7 L583.62 686.7 L579.7 682.78 L579.7 677.22 Z" fill="#3c0000" stroke="#ff0000" stroke-width="1.6"/>
<path d="M586.4 684 V676.5 M584.2 679 L586.4 676.5 L588.6 679" stroke="#ff2020" stroke-width="1.1" fill="none"/>
<rect x="643.5" y="692" width="57" height="15" fill="#c8c8a8" stroke="#800000" stroke-width="3"/>
<text x="641.3" y="685.2" font-size="23.5" fill="#000" text-anchor="start" font-weight="normal" font-style="normal" >R8</text>
<text x="642.5" y="724" font-size="15.7" fill="#000" text-anchor="start" font-weight="normal" font-style="normal" >2k</text>
<rect x="795.5" y="692" width="57" height="15" fill="#c8c8a8" stroke="#800000" stroke-width="3"/>
<text x="793.3" y="685.4" font-size="23.5" fill="#000" text-anchor="start" font-weight="normal" font-style="normal" >R9</text>
<text x="794.5" y="723" font-size="15.7" fill="#000" text-anchor="start" font-weight="normal" font-style="normal" >4k7</text>
<rect x="807.5" y="755.5" width="3" height="40" fill="#800000"/>
<rect x="818.5" y="755.5" width="3" height="40" fill="#800000"/>
<text x="793.3" y="751" font-size="23.5" fill="#000" text-anchor="start" font-weight="normal" font-style="normal" >C4</text>
<text x="794.5" y="811.6" font-size="15.7" fill="#000" text-anchor="start" font-weight="normal" font-style="normal" >100nF</text>
<rect x="909" y="672.3" width="9" height="55" fill="#c8c8a8" stroke="#800000" stroke-width="3"/>
<polyline points="919,689 946.5,661.5 946.5,642.5" stroke="#800000" stroke-width="3" fill="none" stroke-linejoin="miter" stroke-linecap="butt"/>
<polyline points="919,709.5 946.5,737.2 946.5,737.5" stroke="#800000" stroke-width="3" fill="none" stroke-linejoin="miter" stroke-linecap="butt"/>
<path d="M946 737 L928.5 728.5 L936.8 720 Z" fill="#c8c8a8" stroke="#800000" stroke-width="3" stroke-linejoin="miter"/>
<text x="957.3" y="681.6" font-size="23.5" fill="#000" text-anchor="start" font-weight="normal" font-style="normal" >Q2</text>
<text x="958.5" y="703" font-size="15.7" fill="#000" text-anchor="start" font-weight="normal" font-style="normal" >NPN</text>
<rect x="1192" y="584" width="41" height="3" fill="#004000"/>
<rect x="1201.7" y="594" width="22.3" height="3" fill="#004000"/>
<rect x="1210" y="603" width="6" height="3" fill="#004000"/>
<rect x="1451" y="617" width="30" height="15" fill="#c8c8a8" stroke="#800000" stroke-width="3"/>
<text x="1412.5" y="619.8" font-size="15.7" fill="#000" text-anchor="start" font-weight="normal" font-style="normal" >3</text>
<text x="1419.3" y="597.8" font-size="23.5" fill="#000" text-anchor="start" font-weight="normal" font-style="normal" >RV2</text>
<text x="1439.5" y="675.8" font-size="15.7" fill="#000" text-anchor="start" font-weight="normal" font-style="normal" >2k</text>
<path d="M1455.52 639.6 L1461.08 639.6 L1465 643.52 L1465 649.08 L1461.08 653 L1455.52 653 L1451.6 649.08 L1451.6 643.52 Z" fill="#3c0000" stroke="#ff0000" stroke-width="1.6"/><path d="M1454 646.3 H1462.5 M1456.5 644 L1454 646.3 L1456.5 648.6" stroke="#ff2020" stroke-width="1.1" fill="none"/>
<rect x="1288.8" y="737.8" width="170.7" height="150.8" fill="#c8c8a8" stroke="#800000" stroke-width="3"/>
<text x="1298" y="762.2" font-size="15.7" fill="#000" text-anchor="start" font-weight="normal" font-style="normal" >A</text>
<text x="1298" y="800.2" font-size="15.7" fill="#000" text-anchor="start" font-weight="normal" font-style="normal" >B</text>
<text x="1298" y="838.2" font-size="15.7" fill="#000" text-anchor="start" font-weight="normal" font-style="normal" >C</text>
<text x="1298" y="876.2" font-size="15.7" fill="#000" text-anchor="start" font-weight="normal" font-style="normal" >D</text>
<rect x="1336" y="766" width="105" height="96" fill="#002a00"/>
<rect x="1345.6" y="766" width="1" height="96" fill="#000"/>
<rect x="1355.2" y="766" width="1" height="96" fill="#000"/>
<rect x="1364.8" y="766" width="1" height="96" fill="#000"/>
<rect x="1374.4" y="766" width="1" height="96" fill="#000"/>
<rect x="1384" y="766" width="1" height="96" fill="#000"/>
<rect x="1393.6" y="766" width="1" height="96" fill="#000"/>
<rect x="1403.2" y="766" width="1" height="96" fill="#000"/>
<rect x="1412.8" y="766" width="1" height="96" fill="#000"/>
<rect x="1422.4" y="766" width="1" height="96" fill="#000"/>
<rect x="1432" y="766" width="1" height="96" fill="#000"/>
<rect x="1336" y="775.6" width="105" height="1" fill="#000"/>
<rect x="1336" y="785.2" width="105" height="1" fill="#000"/>
<rect x="1336" y="794.8" width="105" height="1" fill="#000"/>
<rect x="1336" y="804.4" width="105" height="1" fill="#000"/>
<rect x="1336" y="814" width="105" height="1" fill="#000"/>
<rect x="1336" y="823.6" width="105" height="1" fill="#000"/>
<rect x="1336" y="833.2" width="105" height="1" fill="#000"/>
<rect x="1336" y="842.8" width="105" height="1" fill="#000"/>
<rect x="1336" y="852.4" width="105" height="1" fill="#000"/>
<rect x="1336" y="766" width="105" height="96" fill="none" stroke="#000" stroke-width="1"/>
<polyline points="1336,785.7 1344.3,785.7 1344.3,773.8 1354.5,773.8 1354.5,785.7 1363.5,785.7 1363.5,773.8 1374,773.8 1374,785.7 1382.3,785.7 1382.3,773.8 1392,773.8 1392,785.7 1401.5,785.7 1401.5,773.8 1411.5,773.8 1411.5,785.7 1421,785.7 1421,773.8 1431,773.8 1431,785.7 1441,785.7" stroke="#ffff00" stroke-width="3" fill="none" stroke-linejoin="miter" stroke-linecap="butt"/>
<polyline points="1336,832.7 1344.3,832.7 1344.3,820.8 1354.5,820.8 1354.5,832.7 1363.5,832.7 1363.5,820.8 1374,820.8 1374,832.7 1382.3,832.7 1382.3,820.8 1392,820.8 1392,832.7 1401.5,832.7 1401.5,820.8 1411.5,820.8 1411.5,832.7 1421,832.7 1421,820.8 1431,820.8 1431,832.7 1441,832.7" stroke="#ff0000" stroke-width="3" fill="none" stroke-linejoin="miter" stroke-linecap="butt"/>
<polyline points="1336,808 1338.5,808 1345.8,796.5 1353.5,808 1361,796.5 1368.7,808 1376,796.5 1383.8,808 1391.3,796.5 1399,808 1406.3,796.5 1414,808 1421.5,796.5 1429.3,808 1437,796.5 1441,800" stroke="#0000ff" stroke-width="3" fill="none" stroke-linejoin="round" stroke-linecap="butt"/>
<polyline points="1336,849.38 1337,850.55 1338,851.25 1339,851.37 1340,850.89 1341,849.89 1342,848.54 1343,847.06 1344,845.71 1345,844.71 1346,844.23 1347,844.35 1348,845.05 1349,846.22 1350,847.65 1351,849.11 1352,850.35 1353,851.15 1354,851.4 1355,851.03 1356,850.13 1357,848.83 1358,847.35 1359,845.96 1360,844.87 1361,844.28 1362,844.28 1363,844.87 1364,845.96 1365,847.35 1366,848.83 1367,850.13 1368,851.03 1369,851.4 1370,851.15 1371,850.35 1372,849.11 1373,847.65 1374,846.22 1375,845.05 1376,844.35 1377,844.23 1378,844.71 1379,845.71 1380,847.06 1381,848.54 1382,849.89 1383,850.89 1384,851.37 1385,851.25 1386,850.55 1387,849.38 1388,847.95 1389,846.49 1390,845.25 1391,844.45 1392,844.2 1393,844.57 1394,845.47 1395,846.77 1396,848.25 1397,849.64 1398,850.73 1399,851.32 1400,851.32 1401,850.73 1402,849.64 1403,848.25 1404,846.77 1405,845.47 1406,844.57 1407,844.2 1408,844.45 1409,845.25 1410,846.49 1411,847.95 1412,849.38 1413,850.55 1414,851.25 1415,851.37 1416,850.89 1417,849.89 1418,848.54 1419,847.06 1420,845.71 1421,844.71 1422,844.23 1423,844.35 1424,845.05 1425,846.22 1426,847.65 1427,849.11 1428,850.35 1429,851.15 1430,851.4 1431,851.03 1432,850.13 1433,848.83 1434,847.35 1435,845.96 1436,844.87 1437,844.28 1438,844.28 1439,844.87 1440,845.96 1441,847.35" stroke="#00ff00" stroke-width="3" fill="none" stroke-linejoin="round" stroke-linecap="butt"/>
</g>
<rect x="674" y="140" width="9" height="452" fill="url(#shR)"/>
<rect x="0" y="591" width="674" height="9" fill="url(#shB)"/>
<rect x="0" y="142" width="674" height="26" fill="#ffffff"/>
<text x="-10.5" y="158.5" font-size="11.75" fill="#9a9a9a" text-anchor="start" font-weight="normal" font-style="normal" >Digital Oscilloscope</text>
<rect x="654" y="144" width="19" height="19" fill="#e3e3e3"/>
<path d="M660.5 150.5 L666.5 156.5 M666.5 150.5 L660.5 156.5" stroke="#fff" stroke-width="1.2"/>
<rect x="0" y="168" width="392" height="423" fill="#000"/>
<rect x="0" y="169" width="391" height="1" fill="#c8c8c8"/>
<rect x="0" y="170" width="389" height="401" fill="#000"/>
<rect x="8" y="170" width="1" height="401" fill="#004400"/>
<rect x="28" y="170" width="1" height="401" fill="#004400"/>
<rect x="48" y="170" width="1" height="401" fill="#004400"/>
<rect x="68" y="170" width="1" height="401" fill="#004400"/>
<rect x="88" y="170" width="1" height="401" fill="#004400"/>
<rect x="108" y="170" width="1" height="401" fill="#004400"/>
<rect x="128" y="170" width="1" height="401" fill="#004400"/>
<rect x="148" y="170" width="1" height="401" fill="#004400"/>
<rect x="168" y="170" width="1" height="401" fill="#004400"/>
<rect x="188" y="170" width="1" height="401" fill="#004400"/>
<rect x="208" y="170" width="1" height="401" fill="#004400"/>
<rect x="228" y="170" width="1" height="401" fill="#004400"/>
<rect x="248" y="170" width="1" height="401" fill="#004400"/>
<rect x="268" y="170" width="1" height="401" fill="#004400"/>
<rect x="288" y="170" width="1" height="401" fill="#004400"/>
<rect x="308" y="170" width="1" height="401" fill="#004400"/>
<rect x="328" y="170" width="1" height="401" fill="#004400"/>
<rect x="348" y="170" width="1" height="401" fill="#004400"/>
<rect x="368" y="170" width="1" height="401" fill="#004400"/>
<rect x="388" y="170" width="1" height="401" fill="#004400"/>
<rect x="388" y="170" width="1" height="401" fill="#004400"/>
<rect x="0" y="170" width="389" height="1" fill="#004400"/>
<rect x="0" y="190" width="389" height="1" fill="#004400"/>
<rect x="0" y="210" width="389" height="1" fill="#004400"/>
<rect x="0" y="230" width="389" height="1" fill="#004400"/>
<rect x="0" y="250" width="389" height="1" fill="#004400"/>
<rect x="0" y="270" width="389" height="1" fill="#004400"/>
<rect x="0" y="290" width="389" height="1" fill="#004400"/>
<rect x="0" y="310" width="389" height="1" fill="#004400"/>
<rect x="0" y="330" width="389" height="1" fill="#004400"/>
<rect x="0" y="350" width="389" height="1" fill="#004400"/>
<rect x="0" y="370" width="389" height="1" fill="#004400"/>
<rect x="0" y="390" width="389" height="1" fill="#004400"/>
<rect x="0" y="410" width="389" height="1" fill="#004400"/>
<rect x="0" y="430" width="389" height="1" fill="#004400"/>
<rect x="0" y="450" width="389" height="1" fill="#004400"/>
<rect x="0" y="470" width="389" height="1" fill="#004400"/>
<rect x="0" y="490" width="389" height="1" fill="#004400"/>
<rect x="0" y="510" width="389" height="1" fill="#004400"/>
<rect x="0" y="530" width="389" height="1" fill="#004400"/>
<rect x="0" y="550" width="389" height="1" fill="#004400"/>
<rect x="0" y="570" width="389" height="1" fill="#004400"/>
<rect x="0" y="420" width="389" height="1" fill="#b8b8b8"/>
<rect x="353" y="170" width="1" height="401" fill="#b8b8b8"/>
<line x1="124.5" y1="170" x2="124.5" y2="571" stroke="#b4b4b4" stroke-width="1" stroke-dasharray="3.5 3.3"/>
<polyline points="0.00,291.50 133.00,291.50 133.00,290.50 179.40,290.50 186.40,308.36 193.40,321.15 200.40,330.32 207.40,336.89 214.40,341.60 221.40,344.97 228.40,347.39 235.40,349.12 242.40,350.36 249.40,351.25 256.40,351.89 263.40,352.35 270.40,352.67 277.40,352.91 284.40,353.08 291.40,353.20 298.40,353.28 305.40,353.34 312.40,353.39 319.40,353.42 326.40,353.44 333.40,353.46 340.40,353.47 347.40,353.48 354.40,353.48 361.40,353.49 368.40,353.49 375.40,353.49 382.40,353.50 389.00,353.50" fill="none" stroke="#ffff00" stroke-width="1.05" stroke-linejoin="round"/>
<polyline points="0.00,373.50 118.70,373.50 125.70,405.13 132.70,425.83 139.70,439.37 146.70,448.23 153.70,454.03 160.70,457.82 167.70,460.30 174.70,461.93 181.70,462.99 188.70,463.68 195.70,464.14 202.70,464.44 209.70,464.63 216.70,464.76 223.70,464.84 230.70,464.90 237.70,464.93 244.70,464.96 251.70,464.97 258.70,464.98 265.70,464.99 272.70,464.99 279.70,464.99 286.70,465.00 293.70,465.00 300.70,465.00 307.70,465.00 314.70,465.00 321.70,465.00 328.70,465.00 335.70,465.00 342.70,465.00 349.70,465.00 356.70,465.00 363.70,465.00 370.70,465.00 377.70,465.00 384.70,465.00 389.00,465.00" fill="none" stroke="#18b050" stroke-width="1.05" stroke-linejoin="round"/>
<polyline points="0.00,509.50 171.00,509.50 173.50,508.50 179.20,487.80 180.00,487.50 389.00,487.50" fill="none" stroke="#1ea4e6" stroke-width="1.05" stroke-linejoin="round"/>
<polyline points="0.00,530.50 177.60,530.50 179.50,515.50 389.00,515.50" fill="none" stroke="#e4207e" stroke-width="1.05" stroke-linejoin="round"/>
<text x="353.5" y="403.5" font-size="9" fill="#a8a8a8" text-anchor="start" font-weight="normal" font-style="normal" >5.72 mS</text>
<text x="355" y="414.5" font-size="9" fill="#10a040" text-anchor="start" font-weight="normal" font-style="normal" >6.25 V</text>
<rect x="389" y="169" width="1" height="403" fill="#d0d0d0"/>
<rect x="0" y="571" width="390" height="2" fill="#d8d8d8"/>
<rect x="0" y="574" width="391" height="16" fill="#efefef"/>
<rect x="180" y="575" width="17" height="14" fill="#cdcdcd"/>
<path d="M381 578.5 L385 582 L381 585.5" stroke="#606060" stroke-width="1.5" fill="none"/>
<rect x="0" y="590" width="392" height="1" fill="#000"/>
<rect x="391" y="167" width="283" height="424" fill="url(#stip)"/>
<rect x="391" y="167" width="1" height="424" fill="#000"/>
<rect x="392" y="167" width="94" height="27" fill="url(#stip)"/>
<rect x="392" y="167" width="93" height="1" fill="#f0f0f0"/>
<rect x="392" y="167" width="1" height="26" fill="#f0f0f0"/>
<rect x="392" y="193" width="94" height="1" fill="#000000"/>
<rect x="485" y="167" width="1" height="27" fill="#000000"/>
<rect x="392" y="194" width="94" height="185" fill="url(#stip)"/>
<rect x="392" y="194" width="93" height="1" fill="#f0f0f0"/>
<rect x="392" y="194" width="1" height="184" fill="#f0f0f0"/>
<rect x="392" y="378" width="94" height="1" fill="#000000"/>
<rect x="485" y="194" width="1" height="185" fill="#000000"/>
<rect x="392" y="379" width="94" height="27" fill="url(#stip)"/>
<rect x="392" y="379" width="93" height="1" fill="#f0f0f0"/>
<rect x="392" y="379" width="1" height="26" fill="#f0f0f0"/>
<rect x="392" y="405" width="94" height="1" fill="#000000"/>
<rect x="485" y="379" width="1" height="27" fill="#000000"/>
<rect x="392" y="406" width="94" height="185" fill="url(#stip)"/>
<rect x="392" y="406" width="93" height="1" fill="#f0f0f0"/>
<rect x="392" y="406" width="1" height="184" fill="#f0f0f0"/>
<rect x="392" y="590" width="94" height="1" fill="#000000"/>
<rect x="485" y="406" width="1" height="185" fill="#000000"/>
<rect x="487" y="167" width="93" height="27" fill="url(#stip)"/>
<rect x="487" y="167" width="92" height="1" fill="#f0f0f0"/>
<rect x="487" y="167" width="1" height="26" fill="#f0f0f0"/>
<rect x="487" y="193" width="93" height="1" fill="#000000"/>
<rect x="579" y="167" width="1" height="27" fill="#000000"/>
<rect x="487" y="194" width="93" height="185" fill="url(#stip)"/>
<rect x="487" y="194" width="92" height="1" fill="#f0f0f0"/>
<rect x="487" y="194" width="1" height="184" fill="#f0f0f0"/>
<rect x="487" y="378" width="93" height="1" fill="#000000"/>
<rect x="579" y="194" width="1" height="185" fill="#000000"/>
<rect x="487" y="379" width="93" height="27" fill="url(#stip)"/>
<rect x="487" y="379" width="92" height="1" fill="#f0f0f0"/>
<rect x="487" y="379" width="1" height="26" fill="#f0f0f0"/>
<rect x="487" y="405" width="93" height="1" fill="#000000"/>
<rect x="579" y="379" width="1" height="27" fill="#000000"/>
<rect x="487" y="406" width="93" height="185" fill="url(#stip)"/>
<rect x="487" y="406" width="92" height="1" fill="#f0f0f0"/>
<rect x="487" y="406" width="1" height="184" fill="#f0f0f0"/>
<rect x="487" y="590" width="93" height="1" fill="#000000"/>
<rect x="579" y="406" width="1" height="185" fill="#000000"/>
<rect x="581" y="167" width="93" height="27" fill="url(#stip)"/>
<rect x="581" y="167" width="92" height="1" fill="#f0f0f0"/>
<rect x="581" y="167" width="1" height="26" fill="#f0f0f0"/>
<rect x="581" y="193" width="93" height="1" fill="#000000"/>
<rect x="673" y="167" width="1" height="27" fill="#000000"/>
<rect x="581" y="194" width="93" height="185" fill="url(#stip)"/>
<rect x="581" y="194" width="92" height="1" fill="#f0f0f0"/>
<rect x="581" y="194" width="1" height="184" fill="#f0f0f0"/>
<rect x="581" y="378" width="93" height="1" fill="#000000"/>
<rect x="673" y="194" width="1" height="185" fill="#000000"/>
<rect x="581" y="379" width="93" height="27" fill="url(#stip)"/>
<rect x="581" y="379" width="92" height="1" fill="#f0f0f0"/>
<rect x="581" y="379" width="1" height="26" fill="#f0f0f0"/>
<rect x="581" y="405" width="93" height="1" fill="#000000"/>
<rect x="673" y="379" width="1" height="27" fill="#000000"/>
<rect x="581" y="406" width="93" height="185" fill="url(#stip)"/>
<rect x="581" y="406" width="92" height="1" fill="#f0f0f0"/>
<rect x="581" y="406" width="1" height="184" fill="#f0f0f0"/>
<rect x="581" y="590" width="93" height="1" fill="#000000"/>
<rect x="673" y="406" width="1" height="185" fill="#000000"/>
<text x="435.5" y="185.2" font-size="11.8" fill="#f4a2a8" text-anchor="middle" font-weight="bold" font-style="normal" >Trigger</text>
<text x="532" y="186" font-size="11.8" fill="#ffff10" text-anchor="middle" font-weight="bold" font-style="normal" >Channel A</text>
<text x="626.5" y="186" font-size="11.8" fill="#e8147c" text-anchor="middle" font-weight="bold" font-style="normal" >Channel C</text>
<text x="436" y="397.5" font-size="11.8" fill="#ec8020" text-anchor="middle" font-weight="bold" font-style="normal" >Horizontal</text>
<text x="532" y="397.5" font-size="11.8" fill="#1e98e8" text-anchor="middle" font-weight="bold" font-style="normal" >Channel B</text>
<text x="626.5" y="397.5" font-size="11.8" fill="#10a040" text-anchor="middle" font-weight="bold" font-style="normal" >Channel D</text>
<text x="423" y="203.5" font-size="9.5" fill="#303030" text-anchor="middle" font-weight="normal" font-style="normal" >Level</text>
<rect x="403.5" y="206.5" width="40" height="81" fill="none" stroke="#f4f4f4" stroke-width="1"/>
<rect x="404.5" y="207.5" width="38" height="79" fill="#b0b0b0" stroke="#000" stroke-width="1"/>
<rect x="411" y="209" width="25" height="76" fill="url(#drumV)"/>
<rect x="411" y="209" width="1" height="76" fill="#e8e8e8"/>
<rect x="435" y="209" width="1" height="76" fill="#000"/>
<path d="M412 211.5 h3 M432 211.5 h3 M412 215.5 h3 M432 215.5 h3 M412 219.5 h3 M432 219.5 h3 M412 223.5 h3 M432 223.5 h3 M412 226.5 h3 M432 226.5 h3 M412 230.5 h3 M432 230.5 h3 M412 234.5 h3 M432 234.5 h3 M412 238.5 h3 M432 238.5 h3 M412 242.5 h3 M432 242.5 h3 M412 246.5 h3 M432 246.5 h3 M412 250.5 h3 M432 250.5 h3 M412 254.5 h3 M432 254.5 h3 M412 258.5 h3 M432 258.5 h3 M412 262.5 h3 M432 262.5 h3 M412 266.5 h3 M432 266.5 h3 M412 270.5 h3 M432 270.5 h3 M412 274.5 h3 M432 274.5 h3 M412 278.5 h3 M432 278.5 h3 M412 282.5 h3 M432 282.5 h3" stroke="#3c3c3c" stroke-width="1" opacity="0.8"/>
<text x="424" y="227.9" font-size="9.5" fill="#1a1a1a" text-anchor="middle" font-weight="normal" font-style="normal" >60</text>
<text x="424" y="247.6" font-size="9.5" fill="#1a1a1a" text-anchor="middle" font-weight="normal" font-style="normal" >70</text>
<text x="424" y="267.8" font-size="9.5" fill="#1a1a1a" text-anchor="middle" font-weight="normal" font-style="normal" >80</text>
<path d="M405 241 L410 246 L405 251 Z M442 241 L437 246 L442 251 Z" fill="#ff0000"/>
<path d="M398.5 235 L395.0 241 L402.0 241 Z M398.5 257 L395.0 251 L402.0 251 Z" fill="#f0a0a8"/><rect x="397.75" y="240" width="1.5" height="12" fill="#f0a0a8"/>
<text x="467.5" y="210.5" font-size="9.5" fill="#303030" text-anchor="end" font-weight="normal" font-style="normal" >AC</text>
<text x="467" y="224" font-size="9.5" fill="#303030" text-anchor="end" font-weight="normal" font-style="normal" >DC</text>
<rect x="469" y="196" width="14" height="1" fill="#101010"/>
<rect x="469" y="196" width="1" height="33" fill="#101010"/>
<rect x="469" y="229" width="15" height="1" fill="#f0f0f0"/>
<rect x="483" y="196" width="1" height="34" fill="#f0f0f0"/>
<rect x="475" y="202" width="3" height="21" fill="#000"/>
<rect x="478" y="202" width="1" height="21" fill="#e0e0e0"/>
<rect x="471" y="213" width="10" height="14" fill="#b0b0b0"/>
<rect x="471" y="213" width="10" height="1" fill="#f0f0f0"/><rect x="471" y="213" width="1" height="14" fill="#f0f0f0"/>
<rect x="471" y="226" width="10" height="1" fill="#404040"/><rect x="480" y="213" width="1" height="14" fill="#404040"/>
<path d="M473 216.5 h6 M473 219.5 h6 M473 222.5 h6 M473 225 h6" stroke="#505050" stroke-width="1"/>
<path d="M458.6 255.5 H462 V245.5 H465.5 M458.6 260.5 H461.5 V270.5 H465.5" stroke="#303030" stroke-width="1.2" fill="none"/>
<rect x="469" y="241" width="14" height="1" fill="#101010"/>
<rect x="469" y="241" width="1" height="33" fill="#101010"/>
<rect x="469" y="274" width="15" height="1" fill="#f0f0f0"/>
<rect x="483" y="241" width="1" height="34" fill="#f0f0f0"/>
<rect x="475" y="247" width="3" height="21" fill="#000"/>
<rect x="478" y="247" width="1" height="21" fill="#e0e0e0"/>
<rect x="471" y="257" width="10" height="14" fill="#b0b0b0"/>
<rect x="471" y="257" width="10" height="1" fill="#f0f0f0"/><rect x="471" y="257" width="1" height="14" fill="#f0f0f0"/>
<rect x="471" y="270" width="10" height="1" fill="#404040"/><rect x="480" y="257" width="1" height="14" fill="#404040"/>
<path d="M473 260.5 h6 M473 263.5 h6 M473 266.5 h6 M473 269 h6" stroke="#505050" stroke-width="1"/>
<text x="466" y="298" font-size="9.5" fill="#303030" text-anchor="end" font-weight="normal" font-style="normal" >Auto</text>
<rect x="469" y="287" width="14" height="14" fill="url(#btn)"/><rect x="469" y="287" width="14" height="1" fill="#e8e8e8"/><rect x="469" y="287" width="1" height="14" fill="#e8e8e8"/><rect x="469" y="301" width="15" height="1" fill="#000"/><rect x="483" y="287" width="1" height="15" fill="#000"/>
<text x="467" y="314" font-size="9.5" fill="#303030" text-anchor="end" font-weight="normal" font-style="normal" >One-Shot</text>
<rect x="469" y="302.5" width="14" height="14" fill="url(#btn)"/><rect x="469" y="302.5" width="14" height="1" fill="#e8e8e8"/><rect x="469" y="302.5" width="1" height="14" fill="#e8e8e8"/><rect x="469" y="316.5" width="15" height="1" fill="#000"/><rect x="483" y="302.5" width="1" height="15" fill="#000"/>
<text x="467" y="329.5" font-size="9.5" fill="#303030" text-anchor="end" font-weight="normal" font-style="normal" >Cursors</text>
<rect x="469" y="318.5" width="14" height="14" fill="url(#btnPink)"/><rect x="469" y="318.5" width="14" height="1" fill="#e8e8e8"/><rect x="469" y="318.5" width="1" height="14" fill="#e8e8e8"/><rect x="469" y="332.5" width="15" height="1" fill="#000"/><rect x="483" y="318.5" width="1" height="15" fill="#000"/>
<text x="438.5" y="349" font-size="9.5" fill="#303030" text-anchor="middle" font-weight="normal" font-style="normal" >Source</text>
<text x="418.5" y="360.5" font-size="9.5" fill="#f4f000" text-anchor="middle" font-weight="bold" font-style="normal" >A</text>
<text x="433" y="360.5" font-size="9.5" fill="#2098e0" text-anchor="middle" font-weight="bold" font-style="normal" >B</text>
<text x="447.5" y="360.5" font-size="9.5" fill="#e01880" text-anchor="middle" font-weight="bold" font-style="normal" >C</text>
<text x="462" y="360.5" font-size="9.5" fill="#10a040" text-anchor="middle" font-weight="bold" font-style="normal" >D</text>
<rect x="407" y="362" width="63" height="1" fill="#101010"/>
<rect x="407" y="362" width="1" height="14" fill="#101010"/>
<rect x="407" y="376" width="64" height="1" fill="#f0f0f0"/>
<rect x="470" y="362" width="1" height="15" fill="#f0f0f0"/>
<rect x="412" y="367.5" width="50" height="3" fill="#000"/><rect x="412" y="370.5" width="50" height="1" fill="#e0e0e0"/>
<rect x="454.5" y="363.5" width="14" height="11" fill="#b0b0b0"/><rect x="454.5" y="363.5" width="14" height="1" fill="#f0f0f0"/><rect x="454.5" y="363.5" width="1" height="11" fill="#f0f0f0"/><rect x="454.5" y="374" width="14" height="1" fill="#404040"/><rect x="468" y="363.5" width="1" height="11" fill="#404040"/>
<path d="M458.5 366 v7 M461.5 366 v7 M464.5 366 v7 M467 366 v7" stroke="#505050" stroke-width="1"/>
<text x="516" y="203.5" font-size="9.5" fill="#303030" text-anchor="middle" font-weight="normal" font-style="normal" >Position</text>
<rect x="497.5" y="206.5" width="40" height="81" fill="none" stroke="#f4f4f4" stroke-width="1"/>
<rect x="498.5" y="207.5" width="38" height="79" fill="#b0b0b0" stroke="#000" stroke-width="1"/>
<rect x="505" y="209" width="25" height="76" fill="url(#drumV)"/>
<rect x="505" y="209" width="1" height="76" fill="#e8e8e8"/>
<rect x="529" y="209" width="1" height="76" fill="#000"/>
<path d="M506 211.5 h3 M526 211.5 h3 M506 215.5 h3 M526 215.5 h3 M506 219.5 h3 M526 219.5 h3 M506 223.5 h3 M526 223.5 h3 M506 226.5 h3 M526 226.5 h3 M506 230.5 h3 M526 230.5 h3 M506 234.5 h3 M526 234.5 h3 M506 238.5 h3 M526 238.5 h3 M506 242.5 h3 M526 242.5 h3 M506 246.5 h3 M526 246.5 h3 M506 250.5 h3 M526 250.5 h3 M506 254.5 h3 M526 254.5 h3 M506 258.5 h3 M526 258.5 h3 M506 262.5 h3 M526 262.5 h3 M506 266.5 h3 M526 266.5 h3 M506 270.5 h3 M526 270.5 h3 M506 274.5 h3 M526 274.5 h3 M506 278.5 h3 M526 278.5 h3 M506 282.5 h3 M526 282.5 h3" stroke="#3c3c3c" stroke-width="1" opacity="0.8"/>
<text x="518" y="220.6" font-size="9.5" fill="#1a1a1a" text-anchor="middle" font-weight="normal" font-style="normal" >-20</text>
<text x="518" y="240.3" font-size="9.5" fill="#1a1a1a" text-anchor="middle" font-weight="normal" font-style="normal" >-10</text>
<text x="518" y="259.9" font-size="9.5" fill="#1a1a1a" text-anchor="middle" font-weight="normal" font-style="normal" >0</text>
<text x="518" y="279.6" font-size="9.5" fill="#1a1a1a" text-anchor="middle" font-weight="normal" font-style="normal" >10</text>
<path d="M499 241 L504 246 L499 251 Z M536 241 L531 246 L536 251 Z" fill="#ff0000"/>
<path d="M492.5 235 L489.0 241 L496.0 241 Z M492.5 257 L489.0 251 L496.0 251 Z" fill="#ffee00"/><rect x="491.75" y="240" width="1.5" height="12" fill="#ffee00"/>
<text x="561" y="210.5" font-size="9.5" fill="#303030" text-anchor="end" font-weight="normal" font-style="normal" >AC</text>
<text x="561" y="224.4" font-size="9.5" fill="#303030" text-anchor="end" font-weight="normal" font-style="normal" >DC</text>
<text x="561" y="238.3" font-size="9.5" fill="#303030" text-anchor="end" font-weight="normal" font-style="normal" >GND</text>
<text x="561" y="252.2" font-size="9.5" fill="#303030" text-anchor="end" font-weight="normal" font-style="normal" >OFF</text>
<rect x="563" y="196" width="14" height="1" fill="#101010"/>
<rect x="563" y="196" width="1" height="63" fill="#101010"/>
<rect x="563" y="259" width="15" height="1" fill="#f0f0f0"/>
<rect x="577" y="196" width="1" height="64" fill="#f0f0f0"/>
<rect x="569" y="202" width="3" height="51" fill="#000"/>
<rect x="572" y="202" width="1" height="51" fill="#e0e0e0"/>
<rect x="565" y="213" width="10" height="14" fill="#b0b0b0"/>
<rect x="565" y="213" width="10" height="1" fill="#f0f0f0"/><rect x="565" y="213" width="1" height="14" fill="#f0f0f0"/>
<rect x="565" y="226" width="10" height="1" fill="#404040"/><rect x="574" y="213" width="1" height="14" fill="#404040"/>
<path d="M567 216.5 h6 M567 219.5 h6 M567 222.5 h6 M567 225 h6" stroke="#505050" stroke-width="1"/>
<text x="561" y="272" font-size="9.5" fill="#303030" text-anchor="end" font-weight="normal" font-style="normal" >Invert</text>
<rect x="563" y="261" width="14" height="14" fill="url(#btn)"/><rect x="563" y="261" width="14" height="1" fill="#e8e8e8"/><rect x="563" y="261" width="1" height="14" fill="#e8e8e8"/><rect x="563" y="275" width="15" height="1" fill="#000"/><rect x="577" y="261" width="1" height="15" fill="#000"/>
<text x="561" y="288" font-size="9.5" fill="#303030" text-anchor="end" font-weight="normal" font-style="normal" >A+B</text>
<rect x="563" y="277" width="14" height="14" fill="url(#btn)"/><rect x="563" y="277" width="14" height="1" fill="#e8e8e8"/><rect x="563" y="277" width="1" height="14" fill="#e8e8e8"/><rect x="563" y="291" width="15" height="1" fill="#000"/><rect x="577" y="277" width="1" height="15" fill="#000"/>
<path d="M489.2 376.2 V332.2 A44.3 44.3 0 0 1 577.8 332.2 V376.2 H552.8 V350.2 H514.2 V376.2 Z" fill="#ffffff" stroke="#5a5a5a" stroke-width="1"/>
<path d="M549.21 306.63 L557.81 294.34 M552.21 308.63 L560.81 296.34" stroke="#5a5a5a" stroke-width="1"/>
<path d="M550.71 307.63 L559.31 295.34" stroke="#a8a8a8" stroke-width="2"/>
<line x1="512.29" y1="351.98" x2="508.63" y2="355.39" stroke="#303030" stroke-width="1"/>
<text x="504.98" y="361.8" font-size="8" fill="#303030" text-anchor="middle" font-weight="normal" font-style="normal" >20</text>
<line x1="506.61" y1="343.06" x2="501.98" y2="344.94" stroke="#303030" stroke-width="1"/>
<text x="497.34" y="349.81" font-size="8" fill="#303030" text-anchor="middle" font-weight="normal" font-style="normal" >10</text>
<line x1="504.5" y1="332.2" x2="499.5" y2="332.2" stroke="#303030" stroke-width="1"/>
<text x="494.5" y="335.2" font-size="8" fill="#303030" text-anchor="middle" font-weight="normal" font-style="normal" >5</text>
<line x1="506.43" y1="321.81" x2="501.76" y2="320.02" stroke="#303030" stroke-width="1"/>
<text x="497.09" y="321.22" font-size="8" fill="#303030" text-anchor="middle" font-weight="normal" font-style="normal" >2</text>
<line x1="512.64" y1="312.05" x2="509.04" y2="308.58" stroke="#303030" stroke-width="1"/>
<text x="505.45" y="308.11" font-size="8" fill="#303030" text-anchor="middle" font-weight="normal" font-style="normal" >1</text>
<line x1="522.4" y1="305.41" x2="520.49" y2="300.79" stroke="#303030" stroke-width="1"/>
<text x="518.58" y="299.17" font-size="8" fill="#303030" text-anchor="middle" font-weight="normal" font-style="normal" >0.5</text>
<line x1="533.5" y1="303.2" x2="533.5" y2="298.2" stroke="#303030" stroke-width="1"/>
<text x="533.5" y="296.2" font-size="8" fill="#303030" text-anchor="middle" font-weight="normal" font-style="normal" >0.2</text>
<line x1="544.36" y1="305.31" x2="546.24" y2="300.68" stroke="#303030" stroke-width="1"/>
<text x="548.11" y="299.04" font-size="8" fill="#303030" text-anchor="middle" font-weight="normal" font-style="normal" >0.1</text>
<line x1="554.71" y1="312.42" x2="558.37" y2="309.01" stroke="#303030" stroke-width="1"/>
<text x="562.02" y="308.6" font-size="8" fill="#303030" text-anchor="middle" font-weight="normal" font-style="normal" >50</text>
<line x1="560.57" y1="321.81" x2="565.24" y2="320.02" stroke="#303030" stroke-width="1"/>
<text x="569.91" y="321.22" font-size="8" fill="#303030" text-anchor="middle" font-weight="normal" font-style="normal" >20</text>
<line x1="562.5" y1="332.2" x2="567.5" y2="332.2" stroke="#303030" stroke-width="1"/>
<text x="572.5" y="335.2" font-size="8" fill="#303030" text-anchor="middle" font-weight="normal" font-style="normal" >10</text>
<line x1="560.19" y1="343.53" x2="564.8" y2="345.48" stroke="#303030" stroke-width="1"/>
<text x="569.4" y="350.44" font-size="8" fill="#303030" text-anchor="middle" font-weight="normal" font-style="normal" >5</text>
<line x1="554.01" y1="352.71" x2="557.54" y2="356.24" stroke="#303030" stroke-width="1"/>
<text x="561.08" y="362.78" font-size="8" fill="#303030" text-anchor="middle" font-weight="normal" font-style="normal" >2</text>
<circle cx="533.5" cy="332.2" r="30" fill="url(#knobOuter)"/>
<circle cx="533.5" cy="332.2" r="29.5" fill="none" stroke="#606060" stroke-width="1" opacity="0.6"/>
<circle cx="534.3" cy="333" r="16" fill="#555"/>
<circle cx="533.5" cy="332.2" r="15.3" fill="url(#knobInner)"/>
<path d="M508.47 322.09 L514.11 330.16 L518.13 320.19 Z" fill="#ffee00"/>
<path d="M547.5 332.2 L540.81 328.95 L540.81 335.45 Z" fill="#ffee00"/>
<text x="501.7" y="372.2" font-size="9.8" fill="#303030" text-anchor="middle" font-weight="normal" font-style="normal" >V</text>
<text x="565.3" y="372.2" font-size="9.8" fill="#303030" text-anchor="middle" font-weight="normal" font-style="normal" >mV</text>
<rect x="516" y="363.2" width="35" height="13" fill="#fff"/>
<rect x="516" y="363.2" width="35" height="1" fill="#000"/><rect x="516" y="363.2" width="1" height="13" fill="#000"/>
<text x="517.8" y="373.2" font-size="9.8" fill="#2030c0" text-anchor="start" font-weight="normal" font-style="normal" >2.5</text>
<text x="610.2" y="203.5" font-size="9.5" fill="#303030" text-anchor="middle" font-weight="normal" font-style="normal" >Position</text>
<rect x="591.7" y="206.5" width="40" height="81" fill="none" stroke="#f4f4f4" stroke-width="1"/>
<rect x="592.7" y="207.5" width="38" height="79" fill="#b0b0b0" stroke="#000" stroke-width="1"/>
<rect x="599.2" y="209" width="25" height="76" fill="url(#drumV)"/>
<rect x="599.2" y="209" width="1" height="76" fill="#e8e8e8"/>
<rect x="623.2" y="209" width="1" height="76" fill="#000"/>
<path d="M600.2 211.5 h3 M620.2 211.5 h3 M600.2 215.5 h3 M620.2 215.5 h3 M600.2 219.5 h3 M620.2 219.5 h3 M600.2 223.5 h3 M620.2 223.5 h3 M600.2 226.5 h3 M620.2 226.5 h3 M600.2 230.5 h3 M620.2 230.5 h3 M600.2 234.5 h3 M620.2 234.5 h3 M600.2 238.5 h3 M620.2 238.5 h3 M600.2 242.5 h3 M620.2 242.5 h3 M600.2 246.5 h3 M620.2 246.5 h3 M600.2 250.5 h3 M620.2 250.5 h3 M600.2 254.5 h3 M620.2 254.5 h3 M600.2 258.5 h3 M620.2 258.5 h3 M600.2 262.5 h3 M620.2 262.5 h3 M600.2 266.5 h3 M620.2 266.5 h3 M600.2 270.5 h3 M620.2 270.5 h3 M600.2 274.5 h3 M620.2 274.5 h3 M600.2 278.5 h3 M620.2 278.5 h3 M600.2 282.5 h3 M620.2 282.5 h3" stroke="#3c3c3c" stroke-width="1" opacity="0.8"/>
<text x="612.2" y="227.9" font-size="9.5" fill="#1a1a1a" text-anchor="middle" font-weight="normal" font-style="normal" >-170</text>
<text x="612.2" y="247.9" font-size="9.5" fill="#1a1a1a" text-anchor="middle" font-weight="normal" font-style="normal" >-160</text>
<text x="612.2" y="267.9" font-size="9.5" fill="#1a1a1a" text-anchor="middle" font-weight="normal" font-style="normal" >-150</text>
<path d="M593.2 241 L598.2 246 L593.2 251 Z M630.2 241 L625.2 246 L630.2 251 Z" fill="#ff0000"/>
<path d="M586.7 235 L583.2 241 L590.2 241 Z M586.7 257 L583.2 251 L590.2 251 Z" fill="#e0107a"/><rect x="585.95" y="240" width="1.5" height="12" fill="#e0107a"/>
<text x="655.2" y="210.5" font-size="9.5" fill="#303030" text-anchor="end" font-weight="normal" font-style="normal" >AC</text>
<text x="655.2" y="224.4" font-size="9.5" fill="#303030" text-anchor="end" font-weight="normal" font-style="normal" >DC</text>
<text x="655.2" y="238.3" font-size="9.5" fill="#303030" text-anchor="end" font-weight="normal" font-style="normal" >GND</text>
<text x="655.2" y="252.2" font-size="9.5" fill="#303030" text-anchor="end" font-weight="normal" font-style="normal" >OFF</text>
<rect x="657.2" y="196" width="14.0" height="1" fill="#101010"/>
<rect x="657.2" y="196" width="1" height="63" fill="#101010"/>
<rect x="657.2" y="259" width="15.0" height="1" fill="#f0f0f0"/>
<rect x="671.2" y="196" width="1" height="64" fill="#f0f0f0"/>
<rect x="663.2" y="202" width="3" height="51" fill="#000"/>
<rect x="666.2" y="202" width="1" height="51" fill="#e0e0e0"/>
<rect x="659.2" y="213" width="10" height="14" fill="#b0b0b0"/>
<rect x="659.2" y="213" width="10" height="1" fill="#f0f0f0"/><rect x="659.2" y="213" width="1" height="14" fill="#f0f0f0"/>
<rect x="659.2" y="226" width="10" height="1" fill="#404040"/><rect x="668.2" y="213" width="1" height="14" fill="#404040"/>
<path d="M661.2 216.5 h6 M661.2 219.5 h6 M661.2 222.5 h6 M661.2 225 h6" stroke="#505050" stroke-width="1"/>
<text x="655.2" y="272" font-size="9.5" fill="#303030" text-anchor="end" font-weight="normal" font-style="normal" >Invert</text>
<rect x="657.2" y="261" width="14" height="14" fill="url(#btn)"/><rect x="657.2" y="261" width="14" height="1" fill="#e8e8e8"/><rect x="657.2" y="261" width="1" height="14" fill="#e8e8e8"/><rect x="657.2" y="275" width="15" height="1" fill="#000"/><rect x="671.2" y="261" width="1" height="15" fill="#000"/>
<text x="655.2" y="288" font-size="9.5" fill="#303030" text-anchor="end" font-weight="normal" font-style="normal" >C+D</text>
<rect x="657.2" y="277" width="14" height="14" fill="url(#btn)"/><rect x="657.2" y="277" width="14" height="1" fill="#e8e8e8"/><rect x="657.2" y="277" width="1" height="14" fill="#e8e8e8"/><rect x="657.2" y="291" width="15" height="1" fill="#000"/><rect x="671.2" y="277" width="1" height="15" fill="#000"/>
<path d="M583.4 376.2 V332.2 A44.3 44.3 0 0 1 672 332.2 V376.2 H647 V350.2 H608.4 V376.2 Z" fill="#ffffff" stroke="#5a5a5a" stroke-width="1"/>
<path d="M643.41 306.63 L652.01 294.34 M646.41 308.63 L655.01 296.34" stroke="#5a5a5a" stroke-width="1"/>
<path d="M644.91 307.63 L653.51 295.34" stroke="#a8a8a8" stroke-width="2"/>
<line x1="606.49" y1="351.98" x2="602.83" y2="355.39" stroke="#303030" stroke-width="1"/>
<text x="599.18" y="361.8" font-size="8" fill="#303030" text-anchor="middle" font-weight="normal" font-style="normal" >20</text>
<line x1="600.81" y1="343.06" x2="596.18" y2="344.94" stroke="#303030" stroke-width="1"/>
<text x="591.54" y="349.81" font-size="8" fill="#303030" text-anchor="middle" font-weight="normal" font-style="normal" >10</text>
<line x1="598.7" y1="332.2" x2="593.7" y2="332.2" stroke="#303030" stroke-width="1"/>
<text x="588.7" y="335.2" font-size="8" fill="#303030" text-anchor="middle" font-weight="normal" font-style="normal" >5</text>
<line x1="600.63" y1="321.81" x2="595.96" y2="320.02" stroke="#303030" stroke-width="1"/>
<text x="591.29" y="321.22" font-size="8" fill="#303030" text-anchor="middle" font-weight="normal" font-style="normal" >2</text>
<line x1="606.84" y1="312.05" x2="603.24" y2="308.58" stroke="#303030" stroke-width="1"/>
<text x="599.65" y="308.11" font-size="8" fill="#303030" text-anchor="middle" font-weight="normal" font-style="normal" >1</text>
<line x1="616.6" y1="305.41" x2="614.69" y2="300.79" stroke="#303030" stroke-width="1"/>
<text x="612.78" y="299.17" font-size="8" fill="#303030" text-anchor="middle" font-weight="normal" font-style="normal" >0.5</text>
<line x1="627.7" y1="303.2" x2="627.7" y2="298.2" stroke="#303030" stroke-width="1"/>
<text x="627.7" y="296.2" font-size="8" fill="#303030" text-anchor="middle" font-weight="normal" font-style="normal" >0.2</text>
<line x1="638.56" y1="305.31" x2="640.44" y2="300.68" stroke="#303030" stroke-width="1"/>
<text x="642.31" y="299.04" font-size="8" fill="#303030" text-anchor="middle" font-weight="normal" font-style="normal" >0.1</text>
<line x1="648.91" y1="312.42" x2="652.57" y2="309.01" stroke="#303030" stroke-width="1"/>
<text x="656.22" y="308.6" font-size="8" fill="#303030" text-anchor="middle" font-weight="normal" font-style="normal" >50</text>
<line x1="654.77" y1="321.81" x2="659.44" y2="320.02" stroke="#303030" stroke-width="1"/>
<text x="664.11" y="321.22" font-size="8" fill="#303030" text-anchor="middle" font-weight="normal" font-style="normal" >20</text>
<line x1="656.7" y1="332.2" x2="661.7" y2="332.2" stroke="#303030" stroke-width="1"/>
<text x="666.7" y="335.2" font-size="8" fill="#303030" text-anchor="middle" font-weight="normal" font-style="normal" >10</text>
<line x1="654.39" y1="343.53" x2="659" y2="345.48" stroke="#303030" stroke-width="1"/>
<text x="663.6" y="350.44" font-size="8" fill="#303030" text-anchor="middle" font-weight="normal" font-style="normal" >5</text>
<line x1="648.21" y1="352.71" x2="651.74" y2="356.24" stroke="#303030" stroke-width="1"/>
<text x="655.28" y="362.78" font-size="8" fill="#303030" text-anchor="middle" font-weight="normal" font-style="normal" >2</text>
<circle cx="627.7" cy="332.2" r="30" fill="url(#knobOuter)"/>
<circle cx="627.7" cy="332.2" r="29.5" fill="none" stroke="#606060" stroke-width="1" opacity="0.6"/>
<circle cx="628.5" cy="333" r="16" fill="#555"/>
<circle cx="627.7" cy="332.2" r="15.3" fill="url(#knobInner)"/>
<path d="M617.59 307.17 L615.69 316.83 L625.66 312.81 Z" fill="#e0107a"/>
<path d="M641.7 332.2 L635.01 328.95 L635.01 335.45 Z" fill="#e0107a"/>
<text x="595.9" y="372.2" font-size="9.8" fill="#303030" text-anchor="middle" font-weight="normal" font-style="normal" >V</text>
<text x="659.5" y="372.2" font-size="9.8" fill="#303030" text-anchor="middle" font-weight="normal" font-style="normal" >mV</text>
<rect x="610.2" y="363.2" width="35" height="13" fill="#fff"/>
<rect x="610.2" y="363.2" width="35" height="1" fill="#000"/><rect x="610.2" y="363.2" width="1" height="13" fill="#000"/>
<text x="612" y="373.2" font-size="9.8" fill="#2030c0" text-anchor="start" font-weight="normal" font-style="normal" >0.62</text>
<text x="516" y="415" font-size="9.5" fill="#303030" text-anchor="middle" font-weight="normal" font-style="normal" >Position</text>
<rect x="497.5" y="418.0" width="40" height="81" fill="none" stroke="#f4f4f4" stroke-width="1"/>
<rect x="498.5" y="419.0" width="38" height="79" fill="#b0b0b0" stroke="#000" stroke-width="1"/>
<rect x="505" y="420.5" width="25" height="76" fill="url(#drumV)"/>
<rect x="505" y="420.5" width="1" height="76" fill="#e8e8e8"/>
<rect x="529" y="420.5" width="1" height="76" fill="#000"/>
<path d="M506 422.5 h3 M526 422.5 h3 M506 426.5 h3 M526 426.5 h3 M506 430.5 h3 M526 430.5 h3 M506 434.5 h3 M526 434.5 h3 M506 438.5 h3 M526 438.5 h3 M506 442.5 h3 M526 442.5 h3 M506 446.5 h3 M526 446.5 h3 M506 450.5 h3 M526 450.5 h3 M506 454.5 h3 M526 454.5 h3 M506 458.5 h3 M526 458.5 h3 M506 462.5 h3 M526 462.5 h3 M506 466.5 h3 M526 466.5 h3 M506 470.5 h3 M526 470.5 h3 M506 474.5 h3 M526 474.5 h3 M506 477.5 h3 M526 477.5 h3 M506 481.5 h3 M526 481.5 h3 M506 485.5 h3 M526 485.5 h3 M506 489.5 h3 M526 489.5 h3 M506 493.5 h3 M526 493.5 h3" stroke="#3c3c3c" stroke-width="1" opacity="0.8"/>
<text x="518" y="439.4" font-size="9.5" fill="#1a1a1a" text-anchor="middle" font-weight="normal" font-style="normal" >-150</text>
<text x="518" y="459.4" font-size="9.5" fill="#1a1a1a" text-anchor="middle" font-weight="normal" font-style="normal" >-140</text>
<text x="518" y="479.4" font-size="9.5" fill="#1a1a1a" text-anchor="middle" font-weight="normal" font-style="normal" >-130</text>
<path d="M499 452.5 L504 457.5 L499 462.5 Z M536 452.5 L531 457.5 L536 462.5 Z" fill="#ff0000"/>
<path d="M492.5 446.5 L489.0 452.5 L496.0 452.5 Z M492.5 468.5 L489.0 462.5 L496.0 462.5 Z" fill="#1a8ae0"/><rect x="491.75" y="451.5" width="1.5" height="12" fill="#1a8ae0"/>
<text x="561" y="422" font-size="9.5" fill="#303030" text-anchor="end" font-weight="normal" font-style="normal" >AC</text>
<text x="561" y="435.9" font-size="9.5" fill="#303030" text-anchor="end" font-weight="normal" font-style="normal" >DC</text>
<text x="561" y="449.8" font-size="9.5" fill="#303030" text-anchor="end" font-weight="normal" font-style="normal" >GND</text>
<text x="561" y="463.7" font-size="9.5" fill="#303030" text-anchor="end" font-weight="normal" font-style="normal" >OFF</text>
<rect x="563" y="407.5" width="14" height="1" fill="#101010"/>
<rect x="563" y="407.5" width="1" height="63.0" fill="#101010"/>
<rect x="563" y="470.5" width="15" height="1" fill="#f0f0f0"/>
<rect x="577" y="407.5" width="1" height="64.0" fill="#f0f0f0"/>
<rect x="569" y="413.5" width="3" height="51" fill="#000"/>
<rect x="572" y="413.5" width="1" height="51" fill="#e0e0e0"/>
<rect x="565" y="424.5" width="10" height="14" fill="#b0b0b0"/>
<rect x="565" y="424.5" width="10" height="1" fill="#f0f0f0"/><rect x="565" y="424.5" width="1" height="14" fill="#f0f0f0"/>
<rect x="565" y="437.5" width="10" height="1" fill="#404040"/><rect x="574" y="424.5" width="1" height="14" fill="#404040"/>
<path d="M567 428.0 h6 M567 431.0 h6 M567 434.0 h6 M567 436.5 h6" stroke="#505050" stroke-width="1"/>
<text x="561" y="483.5" font-size="9.5" fill="#303030" text-anchor="end" font-weight="normal" font-style="normal" >Invert</text>
<rect x="563" y="472.5" width="14" height="14" fill="url(#btn)"/><rect x="563" y="472.5" width="14" height="1" fill="#e8e8e8"/><rect x="563" y="472.5" width="1" height="14" fill="#e8e8e8"/><rect x="563" y="486.5" width="15" height="1" fill="#000"/><rect x="577" y="472.5" width="1" height="15" fill="#000"/>
<path d="M489.2 587.7 V543.7 A44.3 44.3 0 0 1 577.8 543.7 V587.7 H552.8 V561.7 H514.2 V587.7 Z" fill="#ffffff" stroke="#5a5a5a" stroke-width="1"/>
<path d="M549.21 518.13 L557.81 505.84 M552.21 520.13 L560.81 507.84" stroke="#5a5a5a" stroke-width="1"/>
<path d="M550.71 519.13 L559.31 506.84" stroke="#a8a8a8" stroke-width="2"/>
<line x1="512.29" y1="563.48" x2="508.63" y2="566.89" stroke="#303030" stroke-width="1"/>
<text x="504.98" y="573.3" font-size="8" fill="#303030" text-anchor="middle" font-weight="normal" font-style="normal" >20</text>
<line x1="506.61" y1="554.56" x2="501.98" y2="556.44" stroke="#303030" stroke-width="1"/>
<text x="497.34" y="561.31" font-size="8" fill="#303030" text-anchor="middle" font-weight="normal" font-style="normal" >10</text>
<line x1="504.5" y1="543.7" x2="499.5" y2="543.7" stroke="#303030" stroke-width="1"/>
<text x="494.5" y="546.7" font-size="8" fill="#303030" text-anchor="middle" font-weight="normal" font-style="normal" >5</text>
<line x1="506.43" y1="533.31" x2="501.76" y2="531.52" stroke="#303030" stroke-width="1"/>
<text x="497.09" y="532.72" font-size="8" fill="#303030" text-anchor="middle" font-weight="normal" font-style="normal" >2</text>
<line x1="512.64" y1="523.55" x2="509.04" y2="520.08" stroke="#303030" stroke-width="1"/>
<text x="505.45" y="519.61" font-size="8" fill="#303030" text-anchor="middle" font-weight="normal" font-style="normal" >1</text>
<line x1="522.4" y1="516.91" x2="520.49" y2="512.29" stroke="#303030" stroke-width="1"/>
<text x="518.58" y="510.67" font-size="8" fill="#303030" text-anchor="middle" font-weight="normal" font-style="normal" >0.5</text>
<line x1="533.5" y1="514.7" x2="533.5" y2="509.7" stroke="#303030" stroke-width="1"/>
<text x="533.5" y="507.7" font-size="8" fill="#303030" text-anchor="middle" font-weight="normal" font-style="normal" >0.2</text>
<line x1="544.36" y1="516.81" x2="546.24" y2="512.18" stroke="#303030" stroke-width="1"/>
<text x="548.11" y="510.54" font-size="8" fill="#303030" text-anchor="middle" font-weight="normal" font-style="normal" >0.1</text>
<line x1="554.71" y1="523.92" x2="558.37" y2="520.51" stroke="#303030" stroke-width="1"/>
<text x="562.02" y="520.1" font-size="8" fill="#303030" text-anchor="middle" font-weight="normal" font-style="normal" >50</text>
<line x1="560.57" y1="533.31" x2="565.24" y2="531.52" stroke="#303030" stroke-width="1"/>
<text x="569.91" y="532.72" font-size="8" fill="#303030" text-anchor="middle" font-weight="normal" font-style="normal" >20</text>
<line x1="562.5" y1="543.7" x2="567.5" y2="543.7" stroke="#303030" stroke-width="1"/>
<text x="572.5" y="546.7" font-size="8" fill="#303030" text-anchor="middle" font-weight="normal" font-style="normal" >10</text>
<line x1="560.19" y1="555.03" x2="564.8" y2="556.98" stroke="#303030" stroke-width="1"/>
<text x="569.4" y="561.94" font-size="8" fill="#303030" text-anchor="middle" font-weight="normal" font-style="normal" >5</text>
<line x1="554.01" y1="564.21" x2="557.54" y2="567.74" stroke="#303030" stroke-width="1"/>
<text x="561.08" y="574.28" font-size="8" fill="#303030" text-anchor="middle" font-weight="normal" font-style="normal" >2</text>
<circle cx="533.5" cy="543.7" r="30" fill="url(#knobOuter)"/>
<circle cx="533.5" cy="543.7" r="29.5" fill="none" stroke="#606060" stroke-width="1" opacity="0.6"/>
<circle cx="534.3" cy="544.5" r="16" fill="#555"/>
<circle cx="533.5" cy="543.7" r="15.3" fill="url(#knobInner)"/>
<path d="M508.13 534.47 L514.05 542.34 L517.72 532.24 Z" fill="#1a8ae0"/>
<path d="M547.5 543.7 L540.81 540.45 L540.81 546.95 Z" fill="#1a8ae0"/>
<text x="501.7" y="583.7" font-size="9.8" fill="#303030" text-anchor="middle" font-weight="normal" font-style="normal" >V</text>
<text x="565.3" y="583.7" font-size="9.8" fill="#303030" text-anchor="middle" font-weight="normal" font-style="normal" >mV</text>
<rect x="516" y="574.7" width="35" height="13" fill="#fff"/>
<rect x="516" y="574.7" width="35" height="1" fill="#000"/><rect x="516" y="574.7" width="1" height="13" fill="#000"/>
<text x="517.8" y="584.7" font-size="9.8" fill="#2030c0" text-anchor="start" font-weight="normal" font-style="normal" >2.5</text>
<text x="610.2" y="415" font-size="9.5" fill="#303030" text-anchor="middle" font-weight="normal" font-style="normal" >Position</text>
<rect x="591.7" y="418.0" width="40" height="81" fill="none" stroke="#f4f4f4" stroke-width="1"/>
<rect x="592.7" y="419.0" width="38" height="79" fill="#b0b0b0" stroke="#000" stroke-width="1"/>
<rect x="599.2" y="420.5" width="25" height="76" fill="url(#drumV)"/>
<rect x="599.2" y="420.5" width="1" height="76" fill="#e8e8e8"/>
<rect x="623.2" y="420.5" width="1" height="76" fill="#000"/>
<path d="M600.2 422.5 h3 M620.2 422.5 h3 M600.2 426.5 h3 M620.2 426.5 h3 M600.2 430.5 h3 M620.2 430.5 h3 M600.2 434.5 h3 M620.2 434.5 h3 M600.2 438.5 h3 M620.2 438.5 h3 M600.2 442.5 h3 M620.2 442.5 h3 M600.2 446.5 h3 M620.2 446.5 h3 M600.2 450.5 h3 M620.2 450.5 h3 M600.2 454.5 h3 M620.2 454.5 h3 M600.2 458.5 h3 M620.2 458.5 h3 M600.2 462.5 h3 M620.2 462.5 h3 M600.2 466.5 h3 M620.2 466.5 h3 M600.2 470.5 h3 M620.2 470.5 h3 M600.2 474.5 h3 M620.2 474.5 h3 M600.2 477.5 h3 M620.2 477.5 h3 M600.2 481.5 h3 M620.2 481.5 h3 M600.2 485.5 h3 M620.2 485.5 h3 M600.2 489.5 h3 M620.2 489.5 h3 M600.2 493.5 h3 M620.2 493.5 h3" stroke="#3c3c3c" stroke-width="1" opacity="0.8"/>
<text x="612.2" y="439.4" font-size="9.5" fill="#1a1a1a" text-anchor="middle" font-weight="normal" font-style="normal" >-110</text>
<text x="612.2" y="459.4" font-size="9.5" fill="#1a1a1a" text-anchor="middle" font-weight="normal" font-style="normal" >-100</text>
<text x="612.2" y="479.4" font-size="9.5" fill="#1a1a1a" text-anchor="middle" font-weight="normal" font-style="normal" >-90</text>
<path d="M593.2 452.5 L598.2 457.5 L593.2 462.5 Z M630.2 452.5 L625.2 457.5 L630.2 462.5 Z" fill="#ff0000"/>
<path d="M586.7 446.5 L583.2 452.5 L590.2 452.5 Z M586.7 468.5 L583.2 462.5 L590.2 462.5 Z" fill="#0a9a3a"/><rect x="585.95" y="451.5" width="1.5" height="12" fill="#0a9a3a"/>
<text x="655.2" y="422" font-size="9.5" fill="#303030" text-anchor="end" font-weight="normal" font-style="normal" >AC</text>
<text x="655.2" y="435.9" font-size="9.5" fill="#303030" text-anchor="end" font-weight="normal" font-style="normal" >DC</text>
<text x="655.2" y="449.8" font-size="9.5" fill="#303030" text-anchor="end" font-weight="normal" font-style="normal" >GND</text>
<text x="655.2" y="463.7" font-size="9.5" fill="#303030" text-anchor="end" font-weight="normal" font-style="normal" >OFF</text>
<rect x="657.2" y="407.5" width="14.0" height="1" fill="#101010"/>
<rect x="657.2" y="407.5" width="1" height="63.0" fill="#101010"/>
<rect x="657.2" y="470.5" width="15.0" height="1" fill="#f0f0f0"/>
<rect x="671.2" y="407.5" width="1" height="64.0" fill="#f0f0f0"/>
<rect x="663.2" y="413.5" width="3" height="51" fill="#000"/>
<rect x="666.2" y="413.5" width="1" height="51" fill="#e0e0e0"/>
<rect x="659.2" y="424.5" width="10" height="14" fill="#b0b0b0"/>
<rect x="659.2" y="424.5" width="10" height="1" fill="#f0f0f0"/><rect x="659.2" y="424.5" width="1" height="14" fill="#f0f0f0"/>
<rect x="659.2" y="437.5" width="10" height="1" fill="#404040"/><rect x="668.2" y="424.5" width="1" height="14" fill="#404040"/>
<path d="M661.2 428.0 h6 M661.2 431.0 h6 M661.2 434.0 h6 M661.2 436.5 h6" stroke="#505050" stroke-width="1"/>
<text x="655.2" y="483.5" font-size="9.5" fill="#303030" text-anchor="end" font-weight="normal" font-style="normal" >Invert</text>
<rect x="657.2" y="472.5" width="14" height="14" fill="url(#btn)"/><rect x="657.2" y="472.5" width="14" height="1" fill="#e8e8e8"/><rect x="657.2" y="472.5" width="1" height="14" fill="#e8e8e8"/><rect x="657.2" y="486.5" width="15" height="1" fill="#000"/><rect x="671.2" y="472.5" width="1" height="15" fill="#000"/>
<path d="M583.4 587.7 V543.7 A44.3 44.3 0 0 1 672 543.7 V587.7 H647 V561.7 H608.4 V587.7 Z" fill="#ffffff" stroke="#5a5a5a" stroke-width="1"/>
<path d="M643.41 518.13 L652.01 505.84 M646.41 520.13 L655.01 507.84" stroke="#5a5a5a" stroke-width="1"/>
<path d="M644.91 519.13 L653.51 506.84" stroke="#a8a8a8" stroke-width="2"/>
<line x1="606.49" y1="563.48" x2="602.83" y2="566.89" stroke="#303030" stroke-width="1"/>
<text x="599.18" y="573.3" font-size="8" fill="#303030" text-anchor="middle" font-weight="normal" font-style="normal" >20</text>
<line x1="600.81" y1="554.56" x2="596.18" y2="556.44" stroke="#303030" stroke-width="1"/>
<text x="591.54" y="561.31" font-size="8" fill="#303030" text-anchor="middle" font-weight="normal" font-style="normal" >10</text>
<line x1="598.7" y1="543.7" x2="593.7" y2="543.7" stroke="#303030" stroke-width="1"/>
<text x="588.7" y="546.7" font-size="8" fill="#303030" text-anchor="middle" font-weight="normal" font-style="normal" >5</text>
<line x1="600.63" y1="533.31" x2="595.96" y2="531.52" stroke="#303030" stroke-width="1"/>
<text x="591.29" y="532.72" font-size="8" fill="#303030" text-anchor="middle" font-weight="normal" font-style="normal" >2</text>
<line x1="606.84" y1="523.55" x2="603.24" y2="520.08" stroke="#303030" stroke-width="1"/>
<text x="599.65" y="519.61" font-size="8" fill="#303030" text-anchor="middle" font-weight="normal" font-style="normal" >1</text>
<line x1="616.6" y1="516.91" x2="614.69" y2="512.29" stroke="#303030" stroke-width="1"/>
<text x="612.78" y="510.67" font-size="8" fill="#303030" text-anchor="middle" font-weight="normal" font-style="normal" >0.5</text>
<line x1="627.7" y1="514.7" x2="627.7" y2="509.7" stroke="#303030" stroke-width="1"/>
<text x="627.7" y="507.7" font-size="8" fill="#303030" text-anchor="middle" font-weight="normal" font-style="normal" >0.2</text>
<line x1="638.56" y1="516.81" x2="640.44" y2="512.18" stroke="#303030" stroke-width="1"/>
<text x="642.31" y="510.54" font-size="8" fill="#303030" text-anchor="middle" font-weight="normal" font-style="normal" >0.1</text>
<line x1="648.91" y1="523.92" x2="652.57" y2="520.51" stroke="#303030" stroke-width="1"/>
<text x="656.22" y="520.1" font-size="8" fill="#303030" text-anchor="middle" font-weight="normal" font-style="normal" >50</text>
<line x1="654.77" y1="533.31" x2="659.44" y2="531.52" stroke="#303030" stroke-width="1"/>
<text x="664.11" y="532.72" font-size="8" fill="#303030" text-anchor="middle" font-weight="normal" font-style="normal" >20</text>
<line x1="656.7" y1="543.7" x2="661.7" y2="543.7" stroke="#303030" stroke-width="1"/>
<text x="666.7" y="546.7" font-size="8" fill="#303030" text-anchor="middle" font-weight="normal" font-style="normal" >10</text>
<line x1="654.39" y1="555.03" x2="659" y2="556.98" stroke="#303030" stroke-width="1"/>
<text x="663.6" y="561.94" font-size="8" fill="#303030" text-anchor="middle" font-weight="normal" font-style="normal" >5</text>
<line x1="648.21" y1="564.21" x2="651.74" y2="567.74" stroke="#303030" stroke-width="1"/>
<text x="655.28" y="574.28" font-size="8" fill="#303030" text-anchor="middle" font-weight="normal" font-style="normal" >2</text>
<circle cx="627.7" cy="543.7" r="30" fill="url(#knobOuter)"/>
<circle cx="627.7" cy="543.7" r="29.5" fill="none" stroke="#606060" stroke-width="1" opacity="0.6"/>
<circle cx="628.5" cy="544.5" r="16" fill="#555"/>
<circle cx="627.7" cy="543.7" r="15.3" fill="url(#knobInner)"/>
<path d="M602.33 534.47 L608.25 542.34 L611.92 532.24 Z" fill="#0a9a3a"/>
<path d="M641.7 543.7 L635.01 540.45 L635.01 546.95 Z" fill="#0a9a3a"/>
<text x="595.9" y="583.7" font-size="9.8" fill="#303030" text-anchor="middle" font-weight="normal" font-style="normal" >V</text>
<text x="659.5" y="583.7" font-size="9.8" fill="#303030" text-anchor="middle" font-weight="normal" font-style="normal" >mV</text>
<rect x="610.2" y="574.7" width="35" height="13" fill="#fff"/>
<rect x="610.2" y="574.7" width="35" height="1" fill="#000"/><rect x="610.2" y="574.7" width="1" height="13" fill="#000"/>
<text x="612" y="584.7" font-size="9.8" fill="#2030c0" text-anchor="start" font-weight="normal" font-style="normal" >2.5</text>
<text x="438" y="419" font-size="9.5" fill="#303030" text-anchor="middle" font-weight="normal" font-style="normal" >Source</text>
<path d="M405 430 L414.5 421.5 V427" stroke="#ec8020" stroke-width="1.2" fill="none"/>
<text x="424.4" y="428.5" font-size="9.5" fill="#f4f000" text-anchor="middle" font-weight="bold" font-style="normal" >A</text>
<text x="439" y="428.5" font-size="9.5" fill="#2098e0" text-anchor="middle" font-weight="bold" font-style="normal" >B</text>
<text x="453.8" y="428.5" font-size="9.5" fill="#e01880" text-anchor="middle" font-weight="bold" font-style="normal" >C</text>
<text x="468.3" y="428.5" font-size="9.5" fill="#10a040" text-anchor="middle" font-weight="bold" font-style="normal" >D</text>
<rect x="400" y="431" width="79" height="1" fill="#101010"/>
<rect x="400" y="431" width="1" height="14" fill="#101010"/>
<rect x="400" y="445" width="80" height="1" fill="#f0f0f0"/>
<rect x="479" y="431" width="1" height="15" fill="#f0f0f0"/>
<rect x="410" y="436.5" width="62" height="3" fill="#000"/><rect x="410" y="439.5" width="62" height="1" fill="#e0e0e0"/>
<rect x="401.5" y="432.5" width="15" height="12" fill="#b0b0b0"/><rect x="401.5" y="432.5" width="15" height="1" fill="#f0f0f0"/><rect x="401.5" y="432.5" width="1" height="12" fill="#f0f0f0"/><rect x="401.5" y="444" width="15" height="1" fill="#404040"/><rect x="416" y="432.5" width="1" height="12" fill="#404040"/>
<path d="M405 435 v7 M408 435 v7 M411 435 v7 M414 435 v7" stroke="#505050" stroke-width="1"/>
<text x="438" y="457" font-size="9.5" fill="#303030" text-anchor="middle" font-weight="normal" font-style="normal" >Position</text>
<rect x="400" y="460" width="80" height="1" fill="#101010"/>
<rect x="400" y="460" width="1" height="38" fill="#101010"/>
<rect x="400" y="498" width="81" height="1" fill="#f0f0f0"/>
<rect x="480" y="460" width="1" height="39" fill="#f0f0f0"/>
<rect x="401" y="461" width="79" height="37" fill="#b4b4b4"/>
<rect x="401" y="461" width="79" height="1" fill="#000"/><rect x="401" y="497" width="79" height="1" fill="#000"/><rect x="401" y="461" width="1" height="37" fill="#000"/><rect x="479" y="461" width="1" height="37" fill="#000"/>
<rect x="402" y="467" width="77" height="25" fill="url(#drumH)"/>
<rect x="402" y="491" width="77" height="1" fill="#000"/>
<path d="M403.5 468 v3 M403.5 487 v3 M407.5 468 v3 M407.5 487 v3 M411.5 468 v3 M411.5 487 v3 M415.5 468 v3 M415.5 487 v3 M419.5 468 v3 M419.5 487 v3 M423.5 468 v3 M423.5 487 v3 M427.5 468 v3 M427.5 487 v3 M431.5 468 v3 M431.5 487 v3 M435.5 468 v3 M435.5 487 v3 M439.5 468 v3 M439.5 487 v3 M443.5 468 v3 M443.5 487 v3 M447.5 468 v3 M447.5 487 v3 M451.5 468 v3 M451.5 487 v3 M455.5 468 v3 M455.5 487 v3 M459.5 468 v3 M459.5 487 v3 M463.5 468 v3 M463.5 487 v3 M467.5 468 v3 M467.5 487 v3 M471.5 468 v3 M471.5 487 v3 M475.5 468 v3 M475.5 487 v3" stroke="#3c3c3c" stroke-width="1"/>
<text x="410.9" y="482.5" font-size="10" fill="#1a1a1a" text-anchor="middle" font-weight="normal" font-style="normal" >150</text>
<text x="430.9" y="482.5" font-size="10" fill="#1a1a1a" text-anchor="middle" font-weight="normal" font-style="normal" >140</text>
<text x="450.7" y="482.5" font-size="10" fill="#1a1a1a" text-anchor="middle" font-weight="normal" font-style="normal" >130</text>
<text x="470" y="482.5" font-size="10" fill="#1a1a1a" text-anchor="middle" font-weight="normal" font-style="normal" >120</text>
<path d="M434 462 L443 462 L438.5 467 Z M434 497 L443 497 L438.5 492 Z" fill="#ff0000"/>
<path d="M394.2 588 V544 A44.3 44.3 0 0 1 482.8 544 V588 H457.8 V562 H419.2 V588 Z" fill="#ffffff" stroke="#5a5a5a" stroke-width="1"/>
<path d="M454.21 518.43 L462.81 506.14 M457.21 520.43 L465.81 508.14" stroke="#5a5a5a" stroke-width="1"/>
<path d="M455.71 519.43 L464.31 507.14" stroke="#a8a8a8" stroke-width="2"/>
<line x1="417.99" y1="564.51" x2="414.46" y2="568.04" stroke="#303030" stroke-width="1"/>
<text x="410.92" y="574.58" font-size="8" fill="#303030" text-anchor="middle" font-weight="normal" font-style="normal" >200</text>
<line x1="412.89" y1="557.61" x2="408.48" y2="559.96" stroke="#303030" stroke-width="1"/>
<text x="404.07" y="565.31" font-size="8" fill="#303030" text-anchor="middle" font-weight="normal" font-style="normal" >100</text>
<line x1="410.24" y1="550.52" x2="405.37" y2="551.65" stroke="#303030" stroke-width="1"/>
<text x="400.5" y="555.77" font-size="8" fill="#303030" text-anchor="middle" font-weight="normal" font-style="normal" >50</text>
<line x1="409.5" y1="544" x2="404.5" y2="544" stroke="#303030" stroke-width="1"/>
<text x="399.5" y="547" font-size="8" fill="#303030" text-anchor="middle" font-weight="normal" font-style="normal" >20</text>
<line x1="410.24" y1="537.48" x2="405.37" y2="536.35" stroke="#303030" stroke-width="1"/>
<text x="400.5" y="538.23" font-size="8" fill="#303030" text-anchor="middle" font-weight="normal" font-style="normal" >10</text>
<line x1="412.66" y1="530.83" x2="408.21" y2="528.56" stroke="#303030" stroke-width="1"/>
<text x="403.75" y="529.29" font-size="8" fill="#303030" text-anchor="middle" font-weight="normal" font-style="normal" >5</text>
<line x1="416.95" y1="524.6" x2="413.23" y2="521.25" stroke="#303030" stroke-width="1"/>
<text x="409.52" y="520.9" font-size="8" fill="#303030" text-anchor="middle" font-weight="normal" font-style="normal" >2</text>
<line x1="424" y1="518.89" x2="421.5" y2="514.56" stroke="#303030" stroke-width="1"/>
<text x="419" y="513.23" font-size="8" fill="#303030" text-anchor="middle" font-weight="normal" font-style="normal" >1</text>
<line x1="432.47" y1="515.63" x2="431.43" y2="510.74" stroke="#303030" stroke-width="1"/>
<text x="430.39" y="508.85" font-size="8" fill="#303030" text-anchor="middle" font-weight="normal" font-style="normal" >0.5</text>
<line x1="440.52" y1="515.07" x2="440.87" y2="510.08" stroke="#303030" stroke-width="1"/>
<text x="441.22" y="508.1" font-size="8" fill="#303030" text-anchor="middle" font-weight="normal" font-style="normal" >0.2</text>
<line x1="449.83" y1="517.31" x2="451.78" y2="512.7" stroke="#303030" stroke-width="1"/>
<text x="453.74" y="511.1" font-size="8" fill="#303030" text-anchor="middle" font-weight="normal" font-style="normal" >0.1</text>
<line x1="461.66" y1="526.55" x2="465.65" y2="523.54" stroke="#303030" stroke-width="1"/>
<text x="469.65" y="523.53" font-size="8" fill="#303030" text-anchor="middle" font-weight="normal" font-style="normal" >50</text>
<line x1="465.39" y1="533.14" x2="470.02" y2="531.26" stroke="#303030" stroke-width="1"/>
<text x="474.66" y="532.39" font-size="8" fill="#303030" text-anchor="middle" font-weight="normal" font-style="normal" >20</text>
<line x1="467.22" y1="539.96" x2="472.17" y2="539.27" stroke="#303030" stroke-width="1"/>
<text x="477.12" y="541.57" font-size="8" fill="#303030" text-anchor="middle" font-weight="normal" font-style="normal" >10</text>
<line x1="467.34" y1="547.03" x2="472.31" y2="547.55" stroke="#303030" stroke-width="1"/>
<text x="477.29" y="551.08" font-size="8" fill="#303030" text-anchor="middle" font-weight="normal" font-style="normal" >5</text>
<line x1="465.92" y1="553.44" x2="470.65" y2="555.07" stroke="#303030" stroke-width="1"/>
<text x="475.38" y="559.7" font-size="8" fill="#303030" text-anchor="middle" font-weight="normal" font-style="normal" >2</text>
<line x1="462.82" y1="559.79" x2="467.01" y2="562.52" stroke="#303030" stroke-width="1"/>
<text x="471.21" y="568.24" font-size="8" fill="#303030" text-anchor="middle" font-weight="normal" font-style="normal" >1</text>
<line x1="458.28" y1="565.21" x2="461.69" y2="568.87" stroke="#303030" stroke-width="1"/>
<text x="465.1" y="575.52" font-size="8" fill="#303030" text-anchor="middle" font-weight="normal" font-style="normal" >0.5</text>
<circle cx="438.5" cy="544" r="30" fill="url(#knobOuter)"/>
<circle cx="438.5" cy="544" r="29.5" fill="none" stroke="#606060" stroke-width="1" opacity="0.6"/>
<circle cx="439.3" cy="544.8" r="16" fill="#555"/>
<circle cx="438.5" cy="544" r="15.3" fill="url(#knobInner)"/>
<path d="M436.15 517.1 L431.51 525.8 L442.22 524.86 Z" fill="#e87818"/>
<path d="M448.4 553.9 L445.97 546.87 L441.37 551.47 Z" fill="#e87818"/>
<text x="406.7" y="584" font-size="9.8" fill="#303030" text-anchor="middle" font-weight="normal" font-style="normal" >ms</text>
<text x="470.3" y="584" font-size="9.8" fill="#303030" text-anchor="middle" font-weight="normal" font-style="normal" >µs</text>
<rect x="421" y="575" width="35" height="13" fill="#fff"/>
<rect x="421" y="575" width="35" height="1" fill="#000"/><rect x="421" y="575" width="1" height="13" fill="#000"/>
<text x="422.8" y="585" font-size="9.8" fill="#2030c0" text-anchor="start" font-weight="normal" font-style="normal" >0.5m</text>
</svg></body></html>
